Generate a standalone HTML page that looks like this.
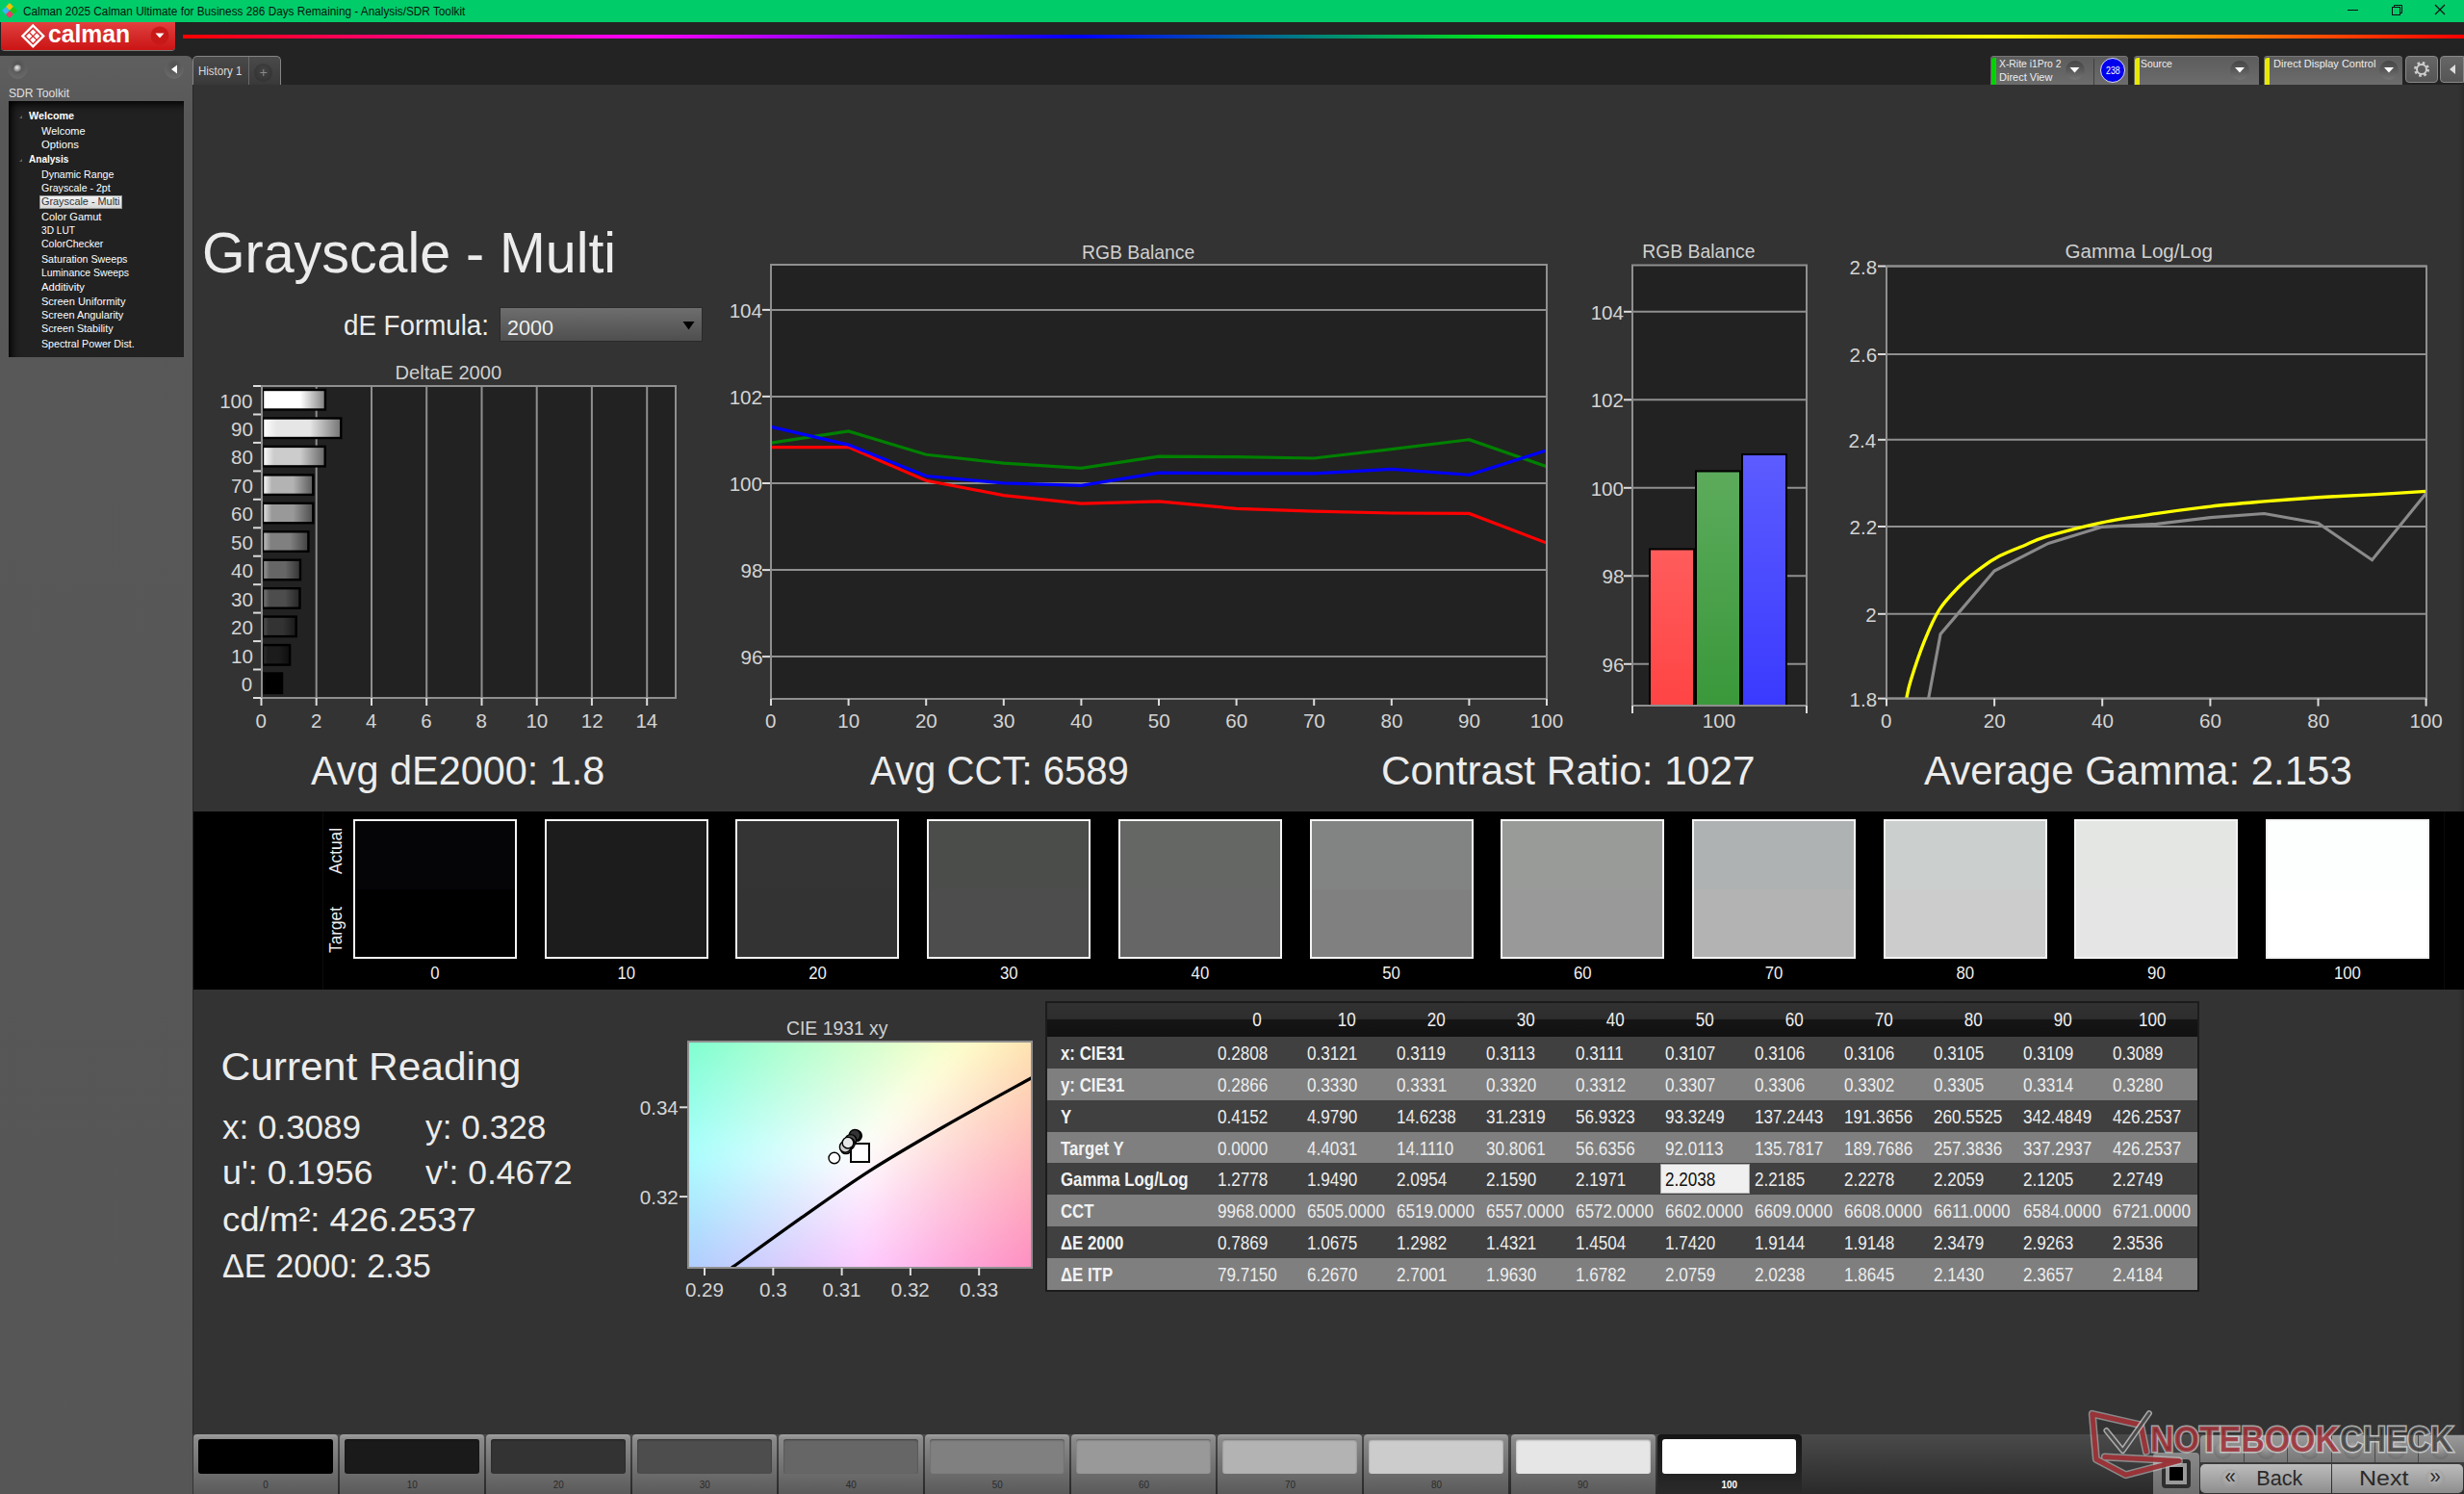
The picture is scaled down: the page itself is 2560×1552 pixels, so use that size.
<!DOCTYPE html>
<html><head><meta charset="utf-8"><title>Calman - Grayscale Multi</title>
<style>
html,body{margin:0;padding:0;}
body{width:2560px;height:1552px;overflow:hidden;position:relative;background:#333;font-family:"Liberation Sans",sans-serif;}
body>div{position:absolute;}
svg{position:absolute;left:0;top:0;font-family:"Liberation Sans",sans-serif;}
</style></head><body>
<div style="left:0;top:0;width:2560px;height:23px;background:#00cc6a"></div>
<div style="left:0;top:23px;width:2560px;height:65px;background:#232323"></div>
<div style="left:1px;top:23px;width:181px;height:29px;background:linear-gradient(#e34040,#d42a2a 50%,#cc1414);border-radius:0 0 4px 4px;box-shadow:0 1px 0 #777"></div>
<div style="left:190px;top:36px;width:2370px;height:4px;background:linear-gradient(90deg,#ff0000 0%,#ff00ff 20.25%,#0000ff 39.2%,#00ff00 59.5%,#ffff00 79.3%,#ff0000 100%)"></div>
<div style="left:0;top:58px;width:200px;height:1494px;background:linear-gradient(#5f5f5f,#585858 60px,#565656);border-radius:0 6px 0 0"></div>
<div style="left:9px;top:105px;width:182px;height:266px;background:#212121;box-shadow:inset 6px 6px 8px -3px #000"></div>
<div style="left:41px;top:203px;width:86px;height:14px;background:linear-gradient(#f2f2f2,#d8d8d8);border:1px solid #999;box-sizing:border-box"></div>
<div style="left:200px;top:88px;width:2360px;height:1402px;background:#333;border-left:1px solid #262626;box-sizing:border-box"></div>
<div style="left:200px;top:58px;width:92px;height:30px;background:linear-gradient(#4a4a4a,#393939);border:1px solid #858585;border-bottom:none;border-radius:5px 5px 0 0;box-sizing:border-box"></div>
<div style="left:258px;top:59px;width:1px;height:29px;background:#6a6a6a"></div>
<div style="left:264px;top:66px;width:19px;height:19px;border-radius:50%;background:radial-gradient(circle at 50% 40%,#444,#2e2e2e)"></div>
<div style="left:2554px;top:88px;width:6px;height:1402px;background:linear-gradient(90deg,#333,#2a2a2a)"></div>
<div style="left:201px;top:843px;width:2359px;height:185px;background:#000"></div>
<div style="left:335px;top:843px;width:1px;height:185px;background:#0c0c0c"></div>
<div style="left:2539px;top:843px;width:1px;height:185px;background:#0a0a0a"></div>
<div style="left:367.0px;top:851px;width:170px;height:145px;border:2px solid #f4f4f4;box-sizing:border-box;background:linear-gradient(#050508 50%,#000000 50%)"></div>
<div style="left:565.7px;top:851px;width:170px;height:145px;border:2px solid #f4f4f4;box-sizing:border-box;background:linear-gradient(#1c1c1c 50%,#1c1c1c 50%)"></div>
<div style="left:764.4px;top:851px;width:170px;height:145px;border:2px solid #f4f4f4;box-sizing:border-box;background:linear-gradient(#333433 50%,#333333 50%)"></div>
<div style="left:963.1px;top:851px;width:170px;height:145px;border:2px solid #f4f4f4;box-sizing:border-box;background:linear-gradient(#4b4d4b 50%,#4d4d4d 50%)"></div>
<div style="left:1161.8px;top:851px;width:170px;height:145px;border:2px solid #f4f4f4;box-sizing:border-box;background:linear-gradient(#656765 50%,#666666 50%)"></div>
<div style="left:1360.5px;top:851px;width:170px;height:145px;border:2px solid #f4f4f4;box-sizing:border-box;background:linear-gradient(#828483 50%,#808080 50%)"></div>
<div style="left:1559.2px;top:851px;width:170px;height:145px;border:2px solid #f4f4f4;box-sizing:border-box;background:linear-gradient(#999b99 50%,#999999 50%)"></div>
<div style="left:1757.9px;top:851px;width:170px;height:145px;border:2px solid #f4f4f4;box-sizing:border-box;background:linear-gradient(#aeb2b2 50%,#b3b3b3 50%)"></div>
<div style="left:1956.6px;top:851px;width:170px;height:145px;border:2px solid #f4f4f4;box-sizing:border-box;background:linear-gradient(#cbcfcd 50%,#cccccc 50%)"></div>
<div style="left:2155.3px;top:851px;width:170px;height:145px;border:2px solid #f4f4f4;box-sizing:border-box;background:linear-gradient(#e3e6e3 50%,#e5e5e5 50%)"></div>
<div style="left:2354.0px;top:851px;width:170px;height:145px;border:2px solid #f4f4f4;box-sizing:border-box;background:linear-gradient(#fdffff 50%,#ffffff 50%)"></div>
<div style="left:1086px;top:1040px;width:1199px;height:302px;background:#1c1c1c"></div>
<div style="left:1088px;top:1042px;width:1195px;height:35px;background:linear-gradient(#313131,#2d2d2d 47%,#151515 50%,#111 100%)"></div>
<div style="left:1088px;top:1077.00px;width:1195px;height:33.15px;background:#404040"></div>
<div style="left:1088px;top:1109.85px;width:1195px;height:33.15px;background:#7f7f7f"></div>
<div style="left:1088px;top:1142.70px;width:1195px;height:33.15px;background:#404040"></div>
<div style="left:1088px;top:1175.55px;width:1195px;height:33.15px;background:#7f7f7f"></div>
<div style="left:1088px;top:1208.40px;width:1195px;height:33.15px;background:#404040"></div>
<div style="left:1088px;top:1241.25px;width:1195px;height:33.15px;background:#7f7f7f"></div>
<div style="left:1088px;top:1274.10px;width:1195px;height:33.15px;background:#404040"></div>
<div style="left:1088px;top:1306.95px;width:1195px;height:33.15px;background:#7f7f7f"></div>
<div style="left:1725px;top:1209px;width:93px;height:31px;background:#f0f0f0;border:1px solid #aaa;box-sizing:border-box"></div>
<div style="left:201px;top:1490px;width:2359px;height:62px;background:linear-gradient(#4a4a4a,#2a2a2a)"></div>
<div style="left:201.0px;top:1490px;width:150px;height:62px;background:linear-gradient(#a0a0a0,#8a8a8a 8%,#6a6a6a 70%,#5a5a5a);border-radius:4px 4px 0 0"></div>
<div style="left:206.0px;top:1495px;width:140px;height:36px;background:#000;border-radius:3px;box-shadow:inset 0 1px 2px rgba(0,0,0,.4)"></div>
<div style="left:353.1px;top:1490px;width:150px;height:62px;background:linear-gradient(#a0a0a0,#8a8a8a 8%,#6a6a6a 70%,#5a5a5a);border-radius:4px 4px 0 0"></div>
<div style="left:358.1px;top:1495px;width:140px;height:36px;background:#1a1a1a;border-radius:3px;box-shadow:inset 0 1px 2px rgba(0,0,0,.4)"></div>
<div style="left:505.1px;top:1490px;width:150px;height:62px;background:linear-gradient(#a0a0a0,#8a8a8a 8%,#6a6a6a 70%,#5a5a5a);border-radius:4px 4px 0 0"></div>
<div style="left:510.1px;top:1495px;width:140px;height:36px;background:#333;border-radius:3px;box-shadow:inset 0 1px 2px rgba(0,0,0,.4)"></div>
<div style="left:657.2px;top:1490px;width:150px;height:62px;background:linear-gradient(#a0a0a0,#8a8a8a 8%,#6a6a6a 70%,#5a5a5a);border-radius:4px 4px 0 0"></div>
<div style="left:662.2px;top:1495px;width:140px;height:36px;background:#4d4d4d;border-radius:3px;box-shadow:inset 0 1px 2px rgba(0,0,0,.4)"></div>
<div style="left:809.2px;top:1490px;width:150px;height:62px;background:linear-gradient(#a0a0a0,#8a8a8a 8%,#6a6a6a 70%,#5a5a5a);border-radius:4px 4px 0 0"></div>
<div style="left:814.2px;top:1495px;width:140px;height:36px;background:#666;border-radius:3px;box-shadow:inset 0 1px 2px rgba(0,0,0,.4)"></div>
<div style="left:961.2px;top:1490px;width:150px;height:62px;background:linear-gradient(#a0a0a0,#8a8a8a 8%,#6a6a6a 70%,#5a5a5a);border-radius:4px 4px 0 0"></div>
<div style="left:966.2px;top:1495px;width:140px;height:36px;background:#808080;border-radius:3px;box-shadow:inset 0 1px 2px rgba(0,0,0,.4)"></div>
<div style="left:1113.3px;top:1490px;width:150px;height:62px;background:linear-gradient(#a0a0a0,#8a8a8a 8%,#6a6a6a 70%,#5a5a5a);border-radius:4px 4px 0 0"></div>
<div style="left:1118.3px;top:1495px;width:140px;height:36px;background:#999;border-radius:3px;box-shadow:inset 0 1px 2px rgba(0,0,0,.4)"></div>
<div style="left:1265.4px;top:1490px;width:150px;height:62px;background:linear-gradient(#a0a0a0,#8a8a8a 8%,#6a6a6a 70%,#5a5a5a);border-radius:4px 4px 0 0"></div>
<div style="left:1270.4px;top:1495px;width:140px;height:36px;background:#b3b3b3;border-radius:3px;box-shadow:inset 0 1px 2px rgba(0,0,0,.4)"></div>
<div style="left:1417.4px;top:1490px;width:150px;height:62px;background:linear-gradient(#a0a0a0,#8a8a8a 8%,#6a6a6a 70%,#5a5a5a);border-radius:4px 4px 0 0"></div>
<div style="left:1422.4px;top:1495px;width:140px;height:36px;background:#ccc;border-radius:3px;box-shadow:inset 0 1px 2px rgba(0,0,0,.4)"></div>
<div style="left:1569.5px;top:1490px;width:150px;height:62px;background:linear-gradient(#a0a0a0,#8a8a8a 8%,#6a6a6a 70%,#5a5a5a);border-radius:4px 4px 0 0"></div>
<div style="left:1574.5px;top:1495px;width:140px;height:36px;background:#e6e6e6;border-radius:3px;box-shadow:inset 0 1px 2px rgba(0,0,0,.4)"></div>
<div style="left:1721.5px;top:1490px;width:150px;height:62px;background:linear-gradient(#161616,#2a2a2a);border-radius:4px 4px 0 0"></div>
<div style="left:1726.5px;top:1495px;width:139px;height:36px;background:#fff;border-radius:3px"></div>
<div style="left:2237px;top:1509px;width:48px;height:43px;background:linear-gradient(#8a8a8a,#6e6e6e);border-radius:4px 4px 0 0"></div>
<div style="left:2246px;top:1516px;width:30px;height:30px;border:4px solid #2e2e2e;border-radius:4px;box-sizing:border-box;background:#999"></div>
<div style="left:2254px;top:1524px;width:14px;height:14px;background:#000"></div>
<div style="left:2286px;top:1491px;width:274px;height:28px;background:linear-gradient(#9a9a9a,#777);border-radius:4px 0 0 0"></div>
<div style="left:2299.5px;top:1497px;width:19px;height:19px;border-radius:50%;background:radial-gradient(circle at 50% 30%,#a8a8a8,#6e6e6e 80%)"></div>
<div style="left:2344.7px;top:1497px;width:19px;height:19px;border-radius:50%;background:radial-gradient(circle at 50% 30%,#a8a8a8,#6e6e6e 80%)"></div>
<div style="left:2389.9px;top:1497px;width:19px;height:19px;border-radius:50%;background:radial-gradient(circle at 50% 30%,#a8a8a8,#6e6e6e 80%)"></div>
<div style="left:2435.1px;top:1497px;width:19px;height:19px;border-radius:50%;background:radial-gradient(circle at 50% 30%,#a8a8a8,#6e6e6e 80%)"></div>
<div style="left:2480.3px;top:1497px;width:19px;height:19px;border-radius:50%;background:radial-gradient(circle at 50% 30%,#a8a8a8,#6e6e6e 80%)"></div>
<div style="left:2525.5px;top:1497px;width:19px;height:19px;border-radius:50%;background:radial-gradient(circle at 50% 30%,#a8a8a8,#6e6e6e 80%)"></div>
<div style="left:2331.2px;top:1491px;width:1px;height:28px;background:#4a4a4a"></div>
<div style="left:2376.4px;top:1491px;width:1px;height:28px;background:#4a4a4a"></div>
<div style="left:2421.6px;top:1491px;width:1px;height:28px;background:#4a4a4a"></div>
<div style="left:2466.8px;top:1491px;width:1px;height:28px;background:#4a4a4a"></div>
<div style="left:2512.0px;top:1491px;width:1px;height:28px;background:#4a4a4a"></div>
<div style="left:2286px;top:1521px;width:136px;height:30px;background:linear-gradient(#bcbcbc,#8e8e8e);border-radius:5px 0 0 5px;box-shadow:0 1px 0 #333"></div>
<div style="left:2423px;top:1521px;width:136px;height:30px;background:linear-gradient(#bcbcbc,#8e8e8e);border-radius:0 5px 5px 0;box-shadow:0 1px 0 #333"></div>
<div style="left:2307px;top:1526px;width:20px;height:20px;border-radius:50%;background:radial-gradient(circle at 50% 35%,#c0c0c0,#8a8a8a)"></div>
<div style="left:2520px;top:1526px;width:20px;height:20px;border-radius:50%;background:radial-gradient(circle at 50% 35%,#c0c0c0,#8a8a8a)"></div>
<div style="left:2068px;top:58px;width:143px;height:30px;background:linear-gradient(#5c5c5c,#6c6c6c);border-radius:4px 4px 0 0;box-shadow:inset 0 1px 0 #777"></div>
<div style="left:2069px;top:60px;width:5px;height:28px;background:#00d400;border-radius:3px 0 0 0"></div>
<div style="left:2217px;top:58px;width:130px;height:30px;background:linear-gradient(#5c5c5c,#6c6c6c);border-radius:4px 4px 0 0;box-shadow:inset 0 1px 0 #777"></div>
<div style="left:2218px;top:60px;width:5px;height:28px;background:#e8e800;border-radius:3px 0 0 0"></div>
<div style="left:2352px;top:58px;width:144px;height:30px;background:linear-gradient(#5c5c5c,#6c6c6c);border-radius:4px 4px 0 0;box-shadow:inset 0 1px 0 #777"></div>
<div style="left:2353px;top:60px;width:5px;height:28px;background:#e8e800;border-radius:3px 0 0 0"></div>
<div style="left:2175px;top:61px;width:1px;height:27px;background:#3f3f3f"></div>
<div style="left:2145.5px;top:62.5px;width:20px;height:20px;border-radius:50%;background:linear-gradient(#454545,#5c5c5c 55%,#747474)"></div>
<div style="left:2317px;top:62.5px;width:20px;height:20px;border-radius:50%;background:linear-gradient(#454545,#5c5c5c 55%,#747474)"></div>
<div style="left:2472px;top:62.5px;width:20px;height:20px;border-radius:50%;background:linear-gradient(#454545,#5c5c5c 55%,#747474)"></div>
<div style="left:2182px;top:60px;width:26px;height:26px;border-radius:50%;background:#0000ee;border:1px solid #dde;box-sizing:border-box"></div>
<div style="left:2499px;top:58px;width:34px;height:28px;background:linear-gradient(#666,#555);border:1px solid #888;border-radius:4px;box-sizing:border-box"></div>
<div style="left:2535px;top:58px;width:25px;height:28px;background:linear-gradient(#666,#555);border:1px solid #888;border-radius:4px 0 0 4px;box-sizing:border-box"></div>
<svg width="2560" height="1552" viewBox="0 0 2560 1552">
<polygon points="10,3 14,7 10,11 6,7" fill="#f5c000"/><polygon points="6,7 10,11 6,15 2,11" fill="#35b8f5"/><polygon points="14,7 18,11 14,15 10,11" fill="#17c817"/><polygon points="10,11 14,15 10,19 6,15" fill="#f0386a"/>
<line x1="2439" y1="10.5" x2="2450" y2="10.5" stroke="#111" stroke-width="1"/>
<rect x="2485.5" y="7.5" width="8" height="8" fill="none" stroke="#111"/><path d="M2487.5 7.5 V5.5 H2495.5 V13.5 H2493.5" fill="none" stroke="#111"/>
<path d="M2530 5 L2540 15 M2540 5 L2530 15" stroke="#111" stroke-width="1.2"/>
<g fill="none" stroke="#fff" stroke-width="2.4"><polygon points="34.3,26.5 45.2,37.4 34.3,48.3 23.4,37.4"/></g>
<g fill="#fff"><polygon points="34.3,30.5 37.4,33.6 34.3,36.7 31.2,33.6"/><polygon points="30.3,34.5 33.4,37.6 30.3,40.7 27.2,37.6"/><polygon points="38.3,34.5 41.4,37.6 38.3,40.7 35.2,37.6"/><polygon points="34.3,38.5 37.4,41.6 34.3,44.7 31.2,41.6"/></g>
<circle cx="166" cy="37" r="9.5" fill="#c81818"/><polygon points="161.5,34.5 170.5,34.5 166,39.5" fill="#fff"/>
<defs><radialGradient id="ball" cx="0.4" cy="0.35" r="0.6"><stop offset="0" stop-color="#f0f0f0"/><stop offset="0.6" stop-color="#9a9a9a"/><stop offset="1" stop-color="#555"/></radialGradient><radialGradient id="btnc" cx="0.5" cy="0.3" r="0.7"><stop offset="0" stop-color="#505050"/><stop offset="1" stop-color="#6a6a6a"/></radialGradient></defs><circle cx="18.5" cy="72" r="10" fill="url(#btnc)"/><circle cx="18.5" cy="71.5" r="4.2" fill="url(#ball)"/>
<circle cx="181" cy="72" r="10" fill="url(#btnc)"/><polygon points="178,72 184,67.5 184,76.5" fill="#fff"/>
<polygon points="20,123 23,120 23,123" fill="#666"/><polygon points="20,168 23,165 23,168" fill="#666"/>
<path d="M273.8 72 V79 M270.3 75.5 H277.3" stroke="#8a8a8a" stroke-width="1"/>
<polygon points="2150.5,70 2160.5,70 2155.5,75.5" fill="#fff"/>
<polygon points="2322,70 2332,70 2327,75.5" fill="#fff"/>
<polygon points="2477,70 2487,70 2482,75.5" fill="#fff"/>
<g transform="translate(2516,72)"><circle r="6.5" fill="none" stroke="#ccc" stroke-width="3" stroke-dasharray="2.5 2.6"/><circle r="5" fill="none" stroke="#ccc" stroke-width="2"/></g>
<polygon points="2545,72 2551,67 2551,77" fill="#ddd"/>
<defs><linearGradient id="dd" x1="0" y1="0" x2="0" y2="1"><stop offset="0" stop-color="#6e6e6e"/><stop offset="1" stop-color="#4e4e4e"/></linearGradient></defs>
<rect x="519.5" y="319.5" width="210" height="35" fill="url(#dd)" stroke="#2a2a2a" stroke-width="1"/>
<polygon points="709.5,334 721.5,334 715.5,342.5" fill="#000"/>
<rect x="272" y="401" width="430" height="324" fill="#222"/>
<line x1="328.7" y1="401" x2="328.7" y2="725" stroke="#8f8f8f" stroke-width="2"/>
<line x1="386.0" y1="401" x2="386.0" y2="725" stroke="#8f8f8f" stroke-width="2"/>
<line x1="443.2" y1="401" x2="443.2" y2="725" stroke="#8f8f8f" stroke-width="2"/>
<line x1="500.5" y1="401" x2="500.5" y2="725" stroke="#8f8f8f" stroke-width="2"/>
<line x1="557.7" y1="401" x2="557.7" y2="725" stroke="#8f8f8f" stroke-width="2"/>
<line x1="614.9" y1="401" x2="614.9" y2="725" stroke="#8f8f8f" stroke-width="2"/>
<line x1="672.2" y1="401" x2="672.2" y2="725" stroke="#8f8f8f" stroke-width="2"/>
<defs>
<linearGradient id="bg0" x1="0" x2="1" y1="0" y2="0"><stop offset="0" stop-color="rgb(10,10,10)"/><stop offset="0.18" stop-color="rgb(0,0,0)"/><stop offset="0.6" stop-color="rgb(0,0,0)"/><stop offset="1" stop-color="rgb(0,0,0)"/></linearGradient>
<linearGradient id="bg1" x1="0" x2="1" y1="0" y2="0"><stop offset="0" stop-color="rgb(50,50,50)"/><stop offset="0.18" stop-color="rgb(28,28,28)"/><stop offset="0.6" stop-color="rgb(28,28,28)"/><stop offset="1" stop-color="rgb(14,14,14)"/></linearGradient>
<linearGradient id="bg2" x1="0" x2="1" y1="0" y2="0"><stop offset="0" stop-color="rgb(83,83,83)"/><stop offset="0.18" stop-color="rgb(51,51,51)"/><stop offset="0.6" stop-color="rgb(51,51,51)"/><stop offset="1" stop-color="rgb(25,25,25)"/></linearGradient>
<linearGradient id="bg3" x1="0" x2="1" y1="0" y2="0"><stop offset="0" stop-color="rgb(121,121,121)"/><stop offset="0.18" stop-color="rgb(77,77,77)"/><stop offset="0.6" stop-color="rgb(77,77,77)"/><stop offset="1" stop-color="rgb(38,38,38)"/></linearGradient>
<linearGradient id="bg4" x1="0" x2="1" y1="0" y2="0"><stop offset="0" stop-color="rgb(157,157,157)"/><stop offset="0.18" stop-color="rgb(102,102,102)"/><stop offset="0.6" stop-color="rgb(102,102,102)"/><stop offset="1" stop-color="rgb(51,51,51)"/></linearGradient>
<linearGradient id="bg5" x1="0" x2="1" y1="0" y2="0"><stop offset="0" stop-color="rgb(195,195,195)"/><stop offset="0.18" stop-color="rgb(128,128,128)"/><stop offset="0.6" stop-color="rgb(128,128,128)"/><stop offset="1" stop-color="rgb(64,64,64)"/></linearGradient>
<linearGradient id="bg6" x1="0" x2="1" y1="0" y2="0"><stop offset="0" stop-color="rgb(231,231,231)"/><stop offset="0.18" stop-color="rgb(153,153,153)"/><stop offset="0.6" stop-color="rgb(153,153,153)"/><stop offset="1" stop-color="rgb(76,76,76)"/></linearGradient>
<linearGradient id="bg7" x1="0" x2="1" y1="0" y2="0"><stop offset="0" stop-color="rgb(255,255,255)"/><stop offset="0.18" stop-color="rgb(179,179,179)"/><stop offset="0.6" stop-color="rgb(179,179,179)"/><stop offset="1" stop-color="rgb(89,89,89)"/></linearGradient>
<linearGradient id="bg8" x1="0" x2="1" y1="0" y2="0"><stop offset="0" stop-color="rgb(255,255,255)"/><stop offset="0.18" stop-color="rgb(204,204,204)"/><stop offset="0.6" stop-color="rgb(204,204,204)"/><stop offset="1" stop-color="rgb(102,102,102)"/></linearGradient>
<linearGradient id="bg9" x1="0" x2="1" y1="0" y2="0"><stop offset="0" stop-color="rgb(255,255,255)"/><stop offset="0.18" stop-color="rgb(230,230,230)"/><stop offset="0.6" stop-color="rgb(230,230,230)"/><stop offset="1" stop-color="rgb(115,115,115)"/></linearGradient>
<linearGradient id="bg10" x1="0" x2="1" y1="0" y2="0"><stop offset="0" stop-color="rgb(255,255,255)"/><stop offset="0.18" stop-color="rgb(255,255,255)"/><stop offset="0.6" stop-color="rgb(255,255,255)"/><stop offset="1" stop-color="rgb(127,127,127)"/></linearGradient>
</defs>
<rect x="273" y="405.0" width="64.9" height="20.5" fill="url(#bg10)" stroke="#000" stroke-width="2.4"/>
<line x1="263" y1="401.0" x2="271" y2="401.0" stroke="#ddd" stroke-width="2"/>
<rect x="273" y="434.5" width="81.3" height="20.5" fill="url(#bg9)" stroke="#000" stroke-width="2.4"/>
<line x1="263" y1="430.5" x2="271" y2="430.5" stroke="#ddd" stroke-width="2"/>
<rect x="273" y="463.9" width="64.7" height="20.5" fill="url(#bg8)" stroke="#000" stroke-width="2.4"/>
<line x1="263" y1="459.9" x2="271" y2="459.9" stroke="#ddd" stroke-width="2"/>
<rect x="273" y="493.4" width="52.3" height="20.5" fill="url(#bg7)" stroke="#000" stroke-width="2.4"/>
<line x1="263" y1="489.4" x2="271" y2="489.4" stroke="#ddd" stroke-width="2"/>
<rect x="273" y="522.8" width="52.3" height="20.5" fill="url(#bg6)" stroke="#000" stroke-width="2.4"/>
<line x1="263" y1="518.8" x2="271" y2="518.8" stroke="#ddd" stroke-width="2"/>
<rect x="273" y="552.3" width="47.4" height="20.5" fill="url(#bg5)" stroke="#000" stroke-width="2.4"/>
<line x1="263" y1="548.3" x2="271" y2="548.3" stroke="#ddd" stroke-width="2"/>
<rect x="273" y="581.7" width="39.0" height="20.5" fill="url(#bg4)" stroke="#000" stroke-width="2.4"/>
<line x1="263" y1="577.7" x2="271" y2="577.7" stroke="#ddd" stroke-width="2"/>
<rect x="273" y="611.2" width="38.5" height="20.5" fill="url(#bg3)" stroke="#000" stroke-width="2.4"/>
<line x1="263" y1="607.2" x2="271" y2="607.2" stroke="#ddd" stroke-width="2"/>
<rect x="273" y="640.6" width="34.7" height="20.5" fill="url(#bg2)" stroke="#000" stroke-width="2.4"/>
<line x1="263" y1="636.6" x2="271" y2="636.6" stroke="#ddd" stroke-width="2"/>
<rect x="273" y="670.1" width="28.1" height="20.5" fill="url(#bg1)" stroke="#000" stroke-width="2.4"/>
<line x1="263" y1="666.1" x2="271" y2="666.1" stroke="#ddd" stroke-width="2"/>
<rect x="273" y="699.5" width="20.0" height="20.5" fill="url(#bg0)" stroke="#000" stroke-width="2.4"/>
<line x1="263" y1="695.5" x2="271" y2="695.5" stroke="#ddd" stroke-width="2"/>
<line x1="263" y1="725" x2="271" y2="725" stroke="#ddd" stroke-width="2"/>
<rect x="272" y="401" width="430" height="324" fill="none" stroke="#8f8f8f" stroke-width="2"/>
<line x1="271.5" y1="725" x2="271.5" y2="733" stroke="#ddd" stroke-width="2"/>
<line x1="328.7" y1="725" x2="328.7" y2="733" stroke="#ddd" stroke-width="2"/>
<line x1="386.0" y1="725" x2="386.0" y2="733" stroke="#ddd" stroke-width="2"/>
<line x1="443.2" y1="725" x2="443.2" y2="733" stroke="#ddd" stroke-width="2"/>
<line x1="500.5" y1="725" x2="500.5" y2="733" stroke="#ddd" stroke-width="2"/>
<line x1="557.7" y1="725" x2="557.7" y2="733" stroke="#ddd" stroke-width="2"/>
<line x1="614.9" y1="725" x2="614.9" y2="733" stroke="#ddd" stroke-width="2"/>
<line x1="672.2" y1="725" x2="672.2" y2="733" stroke="#ddd" stroke-width="2"/>
<rect x="801" y="275" width="806" height="451" fill="#222"/>
<line x1="801" y1="682.1" x2="1607" y2="682.1" stroke="#8f8f8f" stroke-width="2"/>
<line x1="792" y1="682.1" x2="800" y2="682.1" stroke="#ddd" stroke-width="2"/>
<line x1="801" y1="592.1" x2="1607" y2="592.1" stroke="#8f8f8f" stroke-width="2"/>
<line x1="792" y1="592.1" x2="800" y2="592.1" stroke="#ddd" stroke-width="2"/>
<line x1="801" y1="502.0" x2="1607" y2="502.0" stroke="#8f8f8f" stroke-width="2"/>
<line x1="792" y1="502.0" x2="800" y2="502.0" stroke="#ddd" stroke-width="2"/>
<line x1="801" y1="411.9" x2="1607" y2="411.9" stroke="#8f8f8f" stroke-width="2"/>
<line x1="792" y1="411.9" x2="800" y2="411.9" stroke="#ddd" stroke-width="2"/>
<line x1="801" y1="321.9" x2="1607" y2="321.9" stroke="#8f8f8f" stroke-width="2"/>
<line x1="792" y1="321.9" x2="800" y2="321.9" stroke="#ddd" stroke-width="2"/>
<clipPath id="rgbclip"><rect x="801" y="275" width="806" height="451"/></clipPath><g clip-path="url(#rgbclip)">
<polyline points="801.0,464.6 881.6,464.6 962.2,499.2 1042.8,514.6 1123.4,523.1 1204.0,520.9 1284.6,528.4 1365.2,531.2 1445.8,533.0 1526.4,533.4 1607.0,564.1" fill="none" stroke="#ff0000" stroke-width="3.2" stroke-linejoin="miter"/>
<polyline points="801.0,460.2 881.6,448.0 962.2,472.3 1042.8,481.2 1123.4,486.3 1204.0,474.2 1284.6,474.7 1365.2,476.0 1445.8,466.6 1526.4,456.7 1607.0,484.8" fill="none" stroke="#008000" stroke-width="3.2" stroke-linejoin="miter"/>
<polyline points="801.0,443.4 881.6,462.1 962.2,494.5 1042.8,501.9 1123.4,504.3 1204.0,491.1 1284.6,491.8 1365.2,491.8 1445.8,487.4 1526.4,493.3 1607.0,467.7" fill="none" stroke="#0000ff" stroke-width="3.2" stroke-linejoin="miter"/>
</g>
<rect x="801" y="275" width="806" height="451" fill="none" stroke="#8f8f8f" stroke-width="2"/>
<line x1="801.0" y1="726" x2="801.0" y2="733" stroke="#ddd" stroke-width="2"/>
<line x1="881.6" y1="726" x2="881.6" y2="733" stroke="#ddd" stroke-width="2"/>
<line x1="962.2" y1="726" x2="962.2" y2="733" stroke="#ddd" stroke-width="2"/>
<line x1="1042.8" y1="726" x2="1042.8" y2="733" stroke="#ddd" stroke-width="2"/>
<line x1="1123.4" y1="726" x2="1123.4" y2="733" stroke="#ddd" stroke-width="2"/>
<line x1="1204.0" y1="726" x2="1204.0" y2="733" stroke="#ddd" stroke-width="2"/>
<line x1="1284.6" y1="726" x2="1284.6" y2="733" stroke="#ddd" stroke-width="2"/>
<line x1="1365.2" y1="726" x2="1365.2" y2="733" stroke="#ddd" stroke-width="2"/>
<line x1="1445.8" y1="726" x2="1445.8" y2="733" stroke="#ddd" stroke-width="2"/>
<line x1="1526.4" y1="726" x2="1526.4" y2="733" stroke="#ddd" stroke-width="2"/>
<line x1="1607.0" y1="726" x2="1607.0" y2="733" stroke="#ddd" stroke-width="2"/>
<rect x="1696" y="275.5" width="181" height="457.5" fill="#222"/>
<defs><linearGradient id="gr" x1="0" y1="0" x2="0" y2="1"><stop offset="0" stop-color="#ff5c5c"/><stop offset="1" stop-color="#ff4444"/></linearGradient><linearGradient id="gg" x1="0" y1="0" x2="0" y2="1"><stop offset="0" stop-color="#5cab5c"/><stop offset="1" stop-color="#3a983a"/></linearGradient><linearGradient id="gb" x1="0" y1="0" x2="0" y2="1"><stop offset="0" stop-color="#5c5cff"/><stop offset="1" stop-color="#3a3aff"/></linearGradient></defs>
<line x1="1696" y1="689.8" x2="1877" y2="689.8" stroke="#8f8f8f" stroke-width="2"/>
<line x1="1687" y1="689.8" x2="1695" y2="689.8" stroke="#ddd" stroke-width="2"/>
<line x1="1696" y1="598.3" x2="1877" y2="598.3" stroke="#8f8f8f" stroke-width="2"/>
<line x1="1687" y1="598.3" x2="1695" y2="598.3" stroke="#ddd" stroke-width="2"/>
<line x1="1696" y1="506.8" x2="1877" y2="506.8" stroke="#8f8f8f" stroke-width="2"/>
<line x1="1687" y1="506.8" x2="1695" y2="506.8" stroke="#ddd" stroke-width="2"/>
<line x1="1696" y1="415.3" x2="1877" y2="415.3" stroke="#8f8f8f" stroke-width="2"/>
<line x1="1687" y1="415.3" x2="1695" y2="415.3" stroke="#ddd" stroke-width="2"/>
<line x1="1696" y1="323.8" x2="1877" y2="323.8" stroke="#8f8f8f" stroke-width="2"/>
<line x1="1687" y1="323.8" x2="1695" y2="323.8" stroke="#ddd" stroke-width="2"/>
<rect x="1714" y="570.5" width="46" height="162.5" fill="url(#gr)" stroke="#000" stroke-width="2"/>
<rect x="1762" y="489.5" width="46" height="243.5" fill="url(#gg)" stroke="#000" stroke-width="2"/>
<rect x="1810" y="472" width="46" height="261.0" fill="url(#gb)" stroke="#000" stroke-width="2"/>
<rect x="1696" y="275.5" width="181" height="457.5" fill="none" stroke="#8f8f8f" stroke-width="2"/>
<line x1="1696" y1="733" x2="1696" y2="741" stroke="#ddd" stroke-width="2"/><line x1="1877" y1="733" x2="1877" y2="741" stroke="#ddd" stroke-width="2"/>
<rect x="1960" y="276.5" width="561" height="449.1" fill="#222"/>
<line x1="1960" y1="725.6" x2="2521" y2="725.6" stroke="#8f8f8f" stroke-width="2"/>
<line x1="1951" y1="725.6" x2="1959" y2="725.6" stroke="#ddd" stroke-width="2"/>
<line x1="1960" y1="637.8" x2="2521" y2="637.8" stroke="#8f8f8f" stroke-width="2"/>
<line x1="1951" y1="637.8" x2="1959" y2="637.8" stroke="#ddd" stroke-width="2"/>
<line x1="1960" y1="547.0" x2="2521" y2="547.0" stroke="#8f8f8f" stroke-width="2"/>
<line x1="1951" y1="547.0" x2="1959" y2="547.0" stroke="#ddd" stroke-width="2"/>
<line x1="1960" y1="456.8" x2="2521" y2="456.8" stroke="#8f8f8f" stroke-width="2"/>
<line x1="1951" y1="456.8" x2="1959" y2="456.8" stroke="#ddd" stroke-width="2"/>
<line x1="1960" y1="368.0" x2="2521" y2="368.0" stroke="#8f8f8f" stroke-width="2"/>
<line x1="1951" y1="368.0" x2="1959" y2="368.0" stroke="#ddd" stroke-width="2"/>
<line x1="1960" y1="276.5" x2="2521" y2="276.5" stroke="#8f8f8f" stroke-width="2"/>
<line x1="1951" y1="276.5" x2="1959" y2="276.5" stroke="#ddd" stroke-width="2"/>
<clipPath id="gclip"><rect x="1960" y="276.5" width="561" height="449.1"/></clipPath><g clip-path="url(#gclip)">
<polyline points="1960.0,960.1 2016.1,658.7 2072.1,593.0 2128.2,564.4 2184.2,547.3 2240.3,544.3 2296.4,537.7 2352.4,533.5 2408.5,543.4 2464.5,581.7 2520.6,512.4" fill="none" stroke="#8a8a8a" stroke-width="3.2"/>
<path d="M1977.5,745.0 C1978.0,741.8 1979.5,732.0 1980.8,725.6 C1982.0,719.1 1982.2,716.3 1985.3,706.4 C1988.4,696.5 1994.3,678.6 1999.2,666.4 C2004.1,654.2 2008.5,643.2 2014.9,633.3 C2021.2,623.5 2030.2,614.5 2037.5,607.2 C2044.7,600.0 2051.7,594.7 2058.4,589.8 C2065.0,584.9 2070.3,581.4 2077.5,577.6 C2084.8,573.9 2093.8,570.5 2101.9,567.2 C2110.0,563.8 2112.6,561.5 2126.2,557.4 C2139.9,553.4 2164.5,546.8 2183.7,542.8 C2202.8,538.8 2222.3,536.2 2241.1,533.4 C2260.0,530.6 2278.2,528.2 2296.8,526.1 C2315.4,524.0 2333.9,522.5 2352.5,520.9 C2371.1,519.3 2389.6,517.9 2408.2,516.7 C2426.7,515.6 2445.1,515.0 2463.9,513.9 C2482.6,512.9 2511.1,511.0 2520.6,510.4" fill="none" stroke="#ffff00" stroke-width="3.4" stroke-linejoin="round"/>
</g>
<rect x="1960" y="276.5" width="561" height="449.1" fill="none" stroke="#8f8f8f" stroke-width="2"/>
<line x1="1960.0" y1="725.6" x2="1960.0" y2="733.6" stroke="#ddd" stroke-width="2"/>
<line x1="2072.1" y1="725.6" x2="2072.1" y2="733.6" stroke="#ddd" stroke-width="2"/>
<line x1="2184.2" y1="725.6" x2="2184.2" y2="733.6" stroke="#ddd" stroke-width="2"/>
<line x1="2296.4" y1="725.6" x2="2296.4" y2="733.6" stroke="#ddd" stroke-width="2"/>
<line x1="2408.5" y1="725.6" x2="2408.5" y2="733.6" stroke="#ddd" stroke-width="2"/>
<line x1="2520.6" y1="725.6" x2="2520.6" y2="733.6" stroke="#ddd" stroke-width="2"/>
<text transform="translate(355,908) rotate(-90)" font-size="19" fill="#eee" textLength="48" lengthAdjust="spacingAndGlyphs">Actual</text>
<text transform="translate(355,990) rotate(-90)" font-size="19" fill="#eee" textLength="48" lengthAdjust="spacingAndGlyphs">Target</text>
<defs><filter id="blur" x="-10%" y="-10%" width="120%" height="120%"><feGaussianBlur stdDeviation="12"/></filter><clipPath id="cieclip"><rect x="715" y="1082" width="357" height="235"/></clipPath></defs>
<g clip-path="url(#cieclip)"><g filter="url(#blur)">
<rect x="685.2" y="1052.6" width="15.9" height="15.7" fill="rgb(108,254,200)"/>
<rect x="700.1" y="1052.6" width="15.9" height="15.7" fill="rgb(116,254,200)"/>
<rect x="715.0" y="1052.6" width="15.9" height="15.7" fill="rgb(123,254,200)"/>
<rect x="729.9" y="1052.6" width="15.9" height="15.7" fill="rgb(130,254,200)"/>
<rect x="744.8" y="1052.6" width="15.9" height="15.7" fill="rgb(137,254,199)"/>
<rect x="759.6" y="1052.6" width="15.9" height="15.7" fill="rgb(144,254,199)"/>
<rect x="774.5" y="1052.6" width="15.9" height="15.7" fill="rgb(151,254,199)"/>
<rect x="789.4" y="1052.6" width="15.9" height="15.7" fill="rgb(158,254,198)"/>
<rect x="804.2" y="1052.6" width="15.9" height="15.7" fill="rgb(165,254,198)"/>
<rect x="819.1" y="1052.6" width="15.9" height="15.7" fill="rgb(171,254,198)"/>
<rect x="834.0" y="1052.6" width="15.9" height="15.7" fill="rgb(178,254,197)"/>
<rect x="848.9" y="1052.6" width="15.9" height="15.7" fill="rgb(184,254,197)"/>
<rect x="863.8" y="1052.6" width="15.9" height="15.7" fill="rgb(191,254,197)"/>
<rect x="878.6" y="1052.6" width="15.9" height="15.7" fill="rgb(197,254,196)"/>
<rect x="893.5" y="1052.6" width="15.9" height="15.7" fill="rgb(204,254,196)"/>
<rect x="908.4" y="1052.6" width="15.9" height="15.7" fill="rgb(210,254,196)"/>
<rect x="923.2" y="1052.6" width="15.9" height="15.7" fill="rgb(216,254,195)"/>
<rect x="938.1" y="1052.6" width="15.9" height="15.7" fill="rgb(223,254,195)"/>
<rect x="953.0" y="1052.6" width="15.9" height="15.7" fill="rgb(229,254,195)"/>
<rect x="967.9" y="1052.6" width="15.9" height="15.7" fill="rgb(235,254,194)"/>
<rect x="982.8" y="1052.6" width="15.9" height="15.7" fill="rgb(241,254,194)"/>
<rect x="997.6" y="1052.6" width="15.9" height="15.7" fill="rgb(247,254,194)"/>
<rect x="1012.5" y="1052.6" width="15.9" height="15.7" fill="rgb(253,254,193)"/>
<rect x="1027.4" y="1052.6" width="15.9" height="15.7" fill="rgb(254,250,188)"/>
<rect x="1042.2" y="1052.6" width="15.9" height="15.7" fill="rgb(254,244,183)"/>
<rect x="1057.1" y="1052.6" width="15.9" height="15.7" fill="rgb(254,238,177)"/>
<rect x="1072.0" y="1052.6" width="15.9" height="15.7" fill="rgb(254,232,172)"/>
<rect x="1086.9" y="1052.6" width="15.9" height="15.7" fill="rgb(254,227,167)"/>
<rect x="685.2" y="1067.3" width="15.9" height="15.7" fill="rgb(113,254,206)"/>
<rect x="700.1" y="1067.3" width="15.9" height="15.7" fill="rgb(121,254,206)"/>
<rect x="715.0" y="1067.3" width="15.9" height="15.7" fill="rgb(128,254,205)"/>
<rect x="729.9" y="1067.3" width="15.9" height="15.7" fill="rgb(135,254,205)"/>
<rect x="744.8" y="1067.3" width="15.9" height="15.7" fill="rgb(142,254,205)"/>
<rect x="759.6" y="1067.3" width="15.9" height="15.7" fill="rgb(149,254,204)"/>
<rect x="774.5" y="1067.3" width="15.9" height="15.7" fill="rgb(156,254,204)"/>
<rect x="789.4" y="1067.3" width="15.9" height="15.7" fill="rgb(163,254,204)"/>
<rect x="804.2" y="1067.3" width="15.9" height="15.7" fill="rgb(170,254,204)"/>
<rect x="819.1" y="1067.3" width="15.9" height="15.7" fill="rgb(176,254,203)"/>
<rect x="834.0" y="1067.3" width="15.9" height="15.7" fill="rgb(183,254,203)"/>
<rect x="848.9" y="1067.3" width="15.9" height="15.7" fill="rgb(190,254,203)"/>
<rect x="863.8" y="1067.3" width="15.9" height="15.7" fill="rgb(196,254,202)"/>
<rect x="878.6" y="1067.3" width="15.9" height="15.7" fill="rgb(203,254,202)"/>
<rect x="893.5" y="1067.3" width="15.9" height="15.7" fill="rgb(209,254,202)"/>
<rect x="908.4" y="1067.3" width="15.9" height="15.7" fill="rgb(215,254,202)"/>
<rect x="923.2" y="1067.3" width="15.9" height="15.7" fill="rgb(222,254,201)"/>
<rect x="938.1" y="1067.3" width="15.9" height="15.7" fill="rgb(228,254,201)"/>
<rect x="953.0" y="1067.3" width="15.9" height="15.7" fill="rgb(234,254,201)"/>
<rect x="967.9" y="1067.3" width="15.9" height="15.7" fill="rgb(241,254,200)"/>
<rect x="982.8" y="1067.3" width="15.9" height="15.7" fill="rgb(247,254,200)"/>
<rect x="997.6" y="1067.3" width="15.9" height="15.7" fill="rgb(253,254,200)"/>
<rect x="1012.5" y="1067.3" width="15.9" height="15.7" fill="rgb(254,250,195)"/>
<rect x="1027.4" y="1067.3" width="15.9" height="15.7" fill="rgb(254,244,190)"/>
<rect x="1042.2" y="1067.3" width="15.9" height="15.7" fill="rgb(254,238,184)"/>
<rect x="1057.1" y="1067.3" width="15.9" height="15.7" fill="rgb(254,233,179)"/>
<rect x="1072.0" y="1067.3" width="15.9" height="15.7" fill="rgb(254,227,173)"/>
<rect x="1086.9" y="1067.3" width="15.9" height="15.7" fill="rgb(254,222,168)"/>
<rect x="685.2" y="1082.0" width="15.9" height="15.7" fill="rgb(118,254,211)"/>
<rect x="700.1" y="1082.0" width="15.9" height="15.7" fill="rgb(126,254,211)"/>
<rect x="715.0" y="1082.0" width="15.9" height="15.7" fill="rgb(133,254,211)"/>
<rect x="729.9" y="1082.0" width="15.9" height="15.7" fill="rgb(140,254,211)"/>
<rect x="744.8" y="1082.0" width="15.9" height="15.7" fill="rgb(147,254,210)"/>
<rect x="759.6" y="1082.0" width="15.9" height="15.7" fill="rgb(154,254,210)"/>
<rect x="774.5" y="1082.0" width="15.9" height="15.7" fill="rgb(161,254,210)"/>
<rect x="789.4" y="1082.0" width="15.9" height="15.7" fill="rgb(168,254,210)"/>
<rect x="804.2" y="1082.0" width="15.9" height="15.7" fill="rgb(175,254,209)"/>
<rect x="819.1" y="1082.0" width="15.9" height="15.7" fill="rgb(182,254,209)"/>
<rect x="834.0" y="1082.0" width="15.9" height="15.7" fill="rgb(188,254,209)"/>
<rect x="848.9" y="1082.0" width="15.9" height="15.7" fill="rgb(195,254,209)"/>
<rect x="863.8" y="1082.0" width="15.9" height="15.7" fill="rgb(202,254,208)"/>
<rect x="878.6" y="1082.0" width="15.9" height="15.7" fill="rgb(208,254,208)"/>
<rect x="893.5" y="1082.0" width="15.9" height="15.7" fill="rgb(214,254,208)"/>
<rect x="908.4" y="1082.0" width="15.9" height="15.7" fill="rgb(221,254,207)"/>
<rect x="923.2" y="1082.0" width="15.9" height="15.7" fill="rgb(227,254,207)"/>
<rect x="938.1" y="1082.0" width="15.9" height="15.7" fill="rgb(234,254,207)"/>
<rect x="953.0" y="1082.0" width="15.9" height="15.7" fill="rgb(240,254,207)"/>
<rect x="967.9" y="1082.0" width="15.9" height="15.7" fill="rgb(246,254,206)"/>
<rect x="982.8" y="1082.0" width="15.9" height="15.7" fill="rgb(252,254,206)"/>
<rect x="997.6" y="1082.0" width="15.9" height="15.7" fill="rgb(254,250,202)"/>
<rect x="1012.5" y="1082.0" width="15.9" height="15.7" fill="rgb(254,244,196)"/>
<rect x="1027.4" y="1082.0" width="15.9" height="15.7" fill="rgb(254,239,191)"/>
<rect x="1042.2" y="1082.0" width="15.9" height="15.7" fill="rgb(254,233,185)"/>
<rect x="1057.1" y="1082.0" width="15.9" height="15.7" fill="rgb(254,227,180)"/>
<rect x="1072.0" y="1082.0" width="15.9" height="15.7" fill="rgb(254,222,175)"/>
<rect x="1086.9" y="1082.0" width="15.9" height="15.7" fill="rgb(254,217,170)"/>
<rect x="685.2" y="1096.7" width="15.9" height="15.7" fill="rgb(124,254,217)"/>
<rect x="700.1" y="1096.7" width="15.9" height="15.7" fill="rgb(131,254,217)"/>
<rect x="715.0" y="1096.7" width="15.9" height="15.7" fill="rgb(138,254,216)"/>
<rect x="729.9" y="1096.7" width="15.9" height="15.7" fill="rgb(146,254,216)"/>
<rect x="744.8" y="1096.7" width="15.9" height="15.7" fill="rgb(153,254,216)"/>
<rect x="759.6" y="1096.7" width="15.9" height="15.7" fill="rgb(160,254,216)"/>
<rect x="774.5" y="1096.7" width="15.9" height="15.7" fill="rgb(167,254,216)"/>
<rect x="789.4" y="1096.7" width="15.9" height="15.7" fill="rgb(174,254,215)"/>
<rect x="804.2" y="1096.7" width="15.9" height="15.7" fill="rgb(180,254,215)"/>
<rect x="819.1" y="1096.7" width="15.9" height="15.7" fill="rgb(187,254,215)"/>
<rect x="834.0" y="1096.7" width="15.9" height="15.7" fill="rgb(194,254,215)"/>
<rect x="848.9" y="1096.7" width="15.9" height="15.7" fill="rgb(200,254,214)"/>
<rect x="863.8" y="1096.7" width="15.9" height="15.7" fill="rgb(207,254,214)"/>
<rect x="878.6" y="1096.7" width="15.9" height="15.7" fill="rgb(213,254,214)"/>
<rect x="893.5" y="1096.7" width="15.9" height="15.7" fill="rgb(220,254,214)"/>
<rect x="908.4" y="1096.7" width="15.9" height="15.7" fill="rgb(226,254,214)"/>
<rect x="923.2" y="1096.7" width="15.9" height="15.7" fill="rgb(233,254,213)"/>
<rect x="938.1" y="1096.7" width="15.9" height="15.7" fill="rgb(239,254,213)"/>
<rect x="953.0" y="1096.7" width="15.9" height="15.7" fill="rgb(246,254,213)"/>
<rect x="967.9" y="1096.7" width="15.9" height="15.7" fill="rgb(252,254,213)"/>
<rect x="982.8" y="1096.7" width="15.9" height="15.7" fill="rgb(254,251,209)"/>
<rect x="997.6" y="1096.7" width="15.9" height="15.7" fill="rgb(254,245,203)"/>
<rect x="1012.5" y="1096.7" width="15.9" height="15.7" fill="rgb(254,239,197)"/>
<rect x="1027.4" y="1096.7" width="15.9" height="15.7" fill="rgb(254,233,192)"/>
<rect x="1042.2" y="1096.7" width="15.9" height="15.7" fill="rgb(254,227,186)"/>
<rect x="1057.1" y="1096.7" width="15.9" height="15.7" fill="rgb(254,222,181)"/>
<rect x="1072.0" y="1096.7" width="15.9" height="15.7" fill="rgb(254,217,176)"/>
<rect x="1086.9" y="1096.7" width="15.9" height="15.7" fill="rgb(254,211,171)"/>
<rect x="685.2" y="1111.4" width="15.9" height="15.7" fill="rgb(129,254,222)"/>
<rect x="700.1" y="1111.4" width="15.9" height="15.7" fill="rgb(136,254,222)"/>
<rect x="715.0" y="1111.4" width="15.9" height="15.7" fill="rgb(144,254,222)"/>
<rect x="729.9" y="1111.4" width="15.9" height="15.7" fill="rgb(151,254,222)"/>
<rect x="744.8" y="1111.4" width="15.9" height="15.7" fill="rgb(158,254,222)"/>
<rect x="759.6" y="1111.4" width="15.9" height="15.7" fill="rgb(165,254,222)"/>
<rect x="774.5" y="1111.4" width="15.9" height="15.7" fill="rgb(172,254,221)"/>
<rect x="789.4" y="1111.4" width="15.9" height="15.7" fill="rgb(179,254,221)"/>
<rect x="804.2" y="1111.4" width="15.9" height="15.7" fill="rgb(186,254,221)"/>
<rect x="819.1" y="1111.4" width="15.9" height="15.7" fill="rgb(193,254,221)"/>
<rect x="834.0" y="1111.4" width="15.9" height="15.7" fill="rgb(199,254,221)"/>
<rect x="848.9" y="1111.4" width="15.9" height="15.7" fill="rgb(206,254,220)"/>
<rect x="863.8" y="1111.4" width="15.9" height="15.7" fill="rgb(212,254,220)"/>
<rect x="878.6" y="1111.4" width="15.9" height="15.7" fill="rgb(219,254,220)"/>
<rect x="893.5" y="1111.4" width="15.9" height="15.7" fill="rgb(226,254,220)"/>
<rect x="908.4" y="1111.4" width="15.9" height="15.7" fill="rgb(232,254,220)"/>
<rect x="923.2" y="1111.4" width="15.9" height="15.7" fill="rgb(238,254,219)"/>
<rect x="938.1" y="1111.4" width="15.9" height="15.7" fill="rgb(245,254,219)"/>
<rect x="953.0" y="1111.4" width="15.9" height="15.7" fill="rgb(251,254,219)"/>
<rect x="967.9" y="1111.4" width="15.9" height="15.7" fill="rgb(254,251,216)"/>
<rect x="982.8" y="1111.4" width="15.9" height="15.7" fill="rgb(254,245,210)"/>
<rect x="997.6" y="1111.4" width="15.9" height="15.7" fill="rgb(254,239,204)"/>
<rect x="1012.5" y="1111.4" width="15.9" height="15.7" fill="rgb(254,233,198)"/>
<rect x="1027.4" y="1111.4" width="15.9" height="15.7" fill="rgb(254,228,193)"/>
<rect x="1042.2" y="1111.4" width="15.9" height="15.7" fill="rgb(254,222,187)"/>
<rect x="1057.1" y="1111.4" width="15.9" height="15.7" fill="rgb(254,217,182)"/>
<rect x="1072.0" y="1111.4" width="15.9" height="15.7" fill="rgb(254,211,177)"/>
<rect x="1086.9" y="1111.4" width="15.9" height="15.7" fill="rgb(254,206,172)"/>
<rect x="685.2" y="1126.1" width="15.9" height="15.7" fill="rgb(134,254,228)"/>
<rect x="700.1" y="1126.1" width="15.9" height="15.7" fill="rgb(142,254,228)"/>
<rect x="715.0" y="1126.1" width="15.9" height="15.7" fill="rgb(149,254,228)"/>
<rect x="729.9" y="1126.1" width="15.9" height="15.7" fill="rgb(156,254,228)"/>
<rect x="744.8" y="1126.1" width="15.9" height="15.7" fill="rgb(163,254,228)"/>
<rect x="759.6" y="1126.1" width="15.9" height="15.7" fill="rgb(170,254,227)"/>
<rect x="774.5" y="1126.1" width="15.9" height="15.7" fill="rgb(177,254,227)"/>
<rect x="789.4" y="1126.1" width="15.9" height="15.7" fill="rgb(184,254,227)"/>
<rect x="804.2" y="1126.1" width="15.9" height="15.7" fill="rgb(191,254,227)"/>
<rect x="819.1" y="1126.1" width="15.9" height="15.7" fill="rgb(198,254,227)"/>
<rect x="834.0" y="1126.1" width="15.9" height="15.7" fill="rgb(205,254,227)"/>
<rect x="848.9" y="1126.1" width="15.9" height="15.7" fill="rgb(211,254,226)"/>
<rect x="863.8" y="1126.1" width="15.9" height="15.7" fill="rgb(218,254,226)"/>
<rect x="878.6" y="1126.1" width="15.9" height="15.7" fill="rgb(225,254,226)"/>
<rect x="893.5" y="1126.1" width="15.9" height="15.7" fill="rgb(231,254,226)"/>
<rect x="908.4" y="1126.1" width="15.9" height="15.7" fill="rgb(238,254,226)"/>
<rect x="923.2" y="1126.1" width="15.9" height="15.7" fill="rgb(244,254,226)"/>
<rect x="938.1" y="1126.1" width="15.9" height="15.7" fill="rgb(251,254,225)"/>
<rect x="953.0" y="1126.1" width="15.9" height="15.7" fill="rgb(254,252,223)"/>
<rect x="967.9" y="1126.1" width="15.9" height="15.7" fill="rgb(254,246,217)"/>
<rect x="982.8" y="1126.1" width="15.9" height="15.7" fill="rgb(254,240,211)"/>
<rect x="997.6" y="1126.1" width="15.9" height="15.7" fill="rgb(254,234,205)"/>
<rect x="1012.5" y="1126.1" width="15.9" height="15.7" fill="rgb(254,228,199)"/>
<rect x="1027.4" y="1126.1" width="15.9" height="15.7" fill="rgb(254,222,194)"/>
<rect x="1042.2" y="1126.1" width="15.9" height="15.7" fill="rgb(254,217,189)"/>
<rect x="1057.1" y="1126.1" width="15.9" height="15.7" fill="rgb(254,211,183)"/>
<rect x="1072.0" y="1126.1" width="15.9" height="15.7" fill="rgb(254,206,178)"/>
<rect x="1086.9" y="1126.1" width="15.9" height="15.7" fill="rgb(254,201,173)"/>
<rect x="685.2" y="1140.8" width="15.9" height="15.7" fill="rgb(140,254,234)"/>
<rect x="700.1" y="1140.8" width="15.9" height="15.7" fill="rgb(147,254,234)"/>
<rect x="715.0" y="1140.8" width="15.9" height="15.7" fill="rgb(154,254,234)"/>
<rect x="729.9" y="1140.8" width="15.9" height="15.7" fill="rgb(162,254,234)"/>
<rect x="744.8" y="1140.8" width="15.9" height="15.7" fill="rgb(169,254,233)"/>
<rect x="759.6" y="1140.8" width="15.9" height="15.7" fill="rgb(176,254,233)"/>
<rect x="774.5" y="1140.8" width="15.9" height="15.7" fill="rgb(183,254,233)"/>
<rect x="789.4" y="1140.8" width="15.9" height="15.7" fill="rgb(190,254,233)"/>
<rect x="804.2" y="1140.8" width="15.9" height="15.7" fill="rgb(197,254,233)"/>
<rect x="819.1" y="1140.8" width="15.9" height="15.7" fill="rgb(204,254,233)"/>
<rect x="834.0" y="1140.8" width="15.9" height="15.7" fill="rgb(210,254,233)"/>
<rect x="848.9" y="1140.8" width="15.9" height="15.7" fill="rgb(217,254,233)"/>
<rect x="863.8" y="1140.8" width="15.9" height="15.7" fill="rgb(224,254,233)"/>
<rect x="878.6" y="1140.8" width="15.9" height="15.7" fill="rgb(230,254,232)"/>
<rect x="893.5" y="1140.8" width="15.9" height="15.7" fill="rgb(237,254,232)"/>
<rect x="908.4" y="1140.8" width="15.9" height="15.7" fill="rgb(244,254,232)"/>
<rect x="923.2" y="1140.8" width="15.9" height="15.7" fill="rgb(250,254,232)"/>
<rect x="938.1" y="1140.8" width="15.9" height="15.7" fill="rgb(254,252,230)"/>
<rect x="953.0" y="1140.8" width="15.9" height="15.7" fill="rgb(254,246,224)"/>
<rect x="967.9" y="1140.8" width="15.9" height="15.7" fill="rgb(254,240,218)"/>
<rect x="982.8" y="1140.8" width="15.9" height="15.7" fill="rgb(254,234,212)"/>
<rect x="997.6" y="1140.8" width="15.9" height="15.7" fill="rgb(254,228,206)"/>
<rect x="1012.5" y="1140.8" width="15.9" height="15.7" fill="rgb(254,222,200)"/>
<rect x="1027.4" y="1140.8" width="15.9" height="15.7" fill="rgb(254,217,195)"/>
<rect x="1042.2" y="1140.8" width="15.9" height="15.7" fill="rgb(254,211,190)"/>
<rect x="1057.1" y="1140.8" width="15.9" height="15.7" fill="rgb(254,206,184)"/>
<rect x="1072.0" y="1140.8" width="15.9" height="15.7" fill="rgb(254,201,179)"/>
<rect x="1086.9" y="1140.8" width="15.9" height="15.7" fill="rgb(254,196,174)"/>
<rect x="685.2" y="1155.4" width="15.9" height="15.7" fill="rgb(145,254,240)"/>
<rect x="700.1" y="1155.4" width="15.9" height="15.7" fill="rgb(153,254,240)"/>
<rect x="715.0" y="1155.4" width="15.9" height="15.7" fill="rgb(160,254,240)"/>
<rect x="729.9" y="1155.4" width="15.9" height="15.7" fill="rgb(167,254,240)"/>
<rect x="744.8" y="1155.4" width="15.9" height="15.7" fill="rgb(174,254,239)"/>
<rect x="759.6" y="1155.4" width="15.9" height="15.7" fill="rgb(182,254,239)"/>
<rect x="774.5" y="1155.4" width="15.9" height="15.7" fill="rgb(189,254,239)"/>
<rect x="789.4" y="1155.4" width="15.9" height="15.7" fill="rgb(196,254,239)"/>
<rect x="804.2" y="1155.4" width="15.9" height="15.7" fill="rgb(202,254,239)"/>
<rect x="819.1" y="1155.4" width="15.9" height="15.7" fill="rgb(209,254,239)"/>
<rect x="834.0" y="1155.4" width="15.9" height="15.7" fill="rgb(216,254,239)"/>
<rect x="848.9" y="1155.4" width="15.9" height="15.7" fill="rgb(223,254,239)"/>
<rect x="863.8" y="1155.4" width="15.9" height="15.7" fill="rgb(230,254,239)"/>
<rect x="878.6" y="1155.4" width="15.9" height="15.7" fill="rgb(236,254,239)"/>
<rect x="893.5" y="1155.4" width="15.9" height="15.7" fill="rgb(243,254,239)"/>
<rect x="908.4" y="1155.4" width="15.9" height="15.7" fill="rgb(250,254,239)"/>
<rect x="923.2" y="1155.4" width="15.9" height="15.7" fill="rgb(254,253,237)"/>
<rect x="938.1" y="1155.4" width="15.9" height="15.7" fill="rgb(254,246,231)"/>
<rect x="953.0" y="1155.4" width="15.9" height="15.7" fill="rgb(254,240,224)"/>
<rect x="967.9" y="1155.4" width="15.9" height="15.7" fill="rgb(254,234,218)"/>
<rect x="982.8" y="1155.4" width="15.9" height="15.7" fill="rgb(254,228,213)"/>
<rect x="997.6" y="1155.4" width="15.9" height="15.7" fill="rgb(254,222,207)"/>
<rect x="1012.5" y="1155.4" width="15.9" height="15.7" fill="rgb(254,217,201)"/>
<rect x="1027.4" y="1155.4" width="15.9" height="15.7" fill="rgb(254,211,196)"/>
<rect x="1042.2" y="1155.4" width="15.9" height="15.7" fill="rgb(254,206,191)"/>
<rect x="1057.1" y="1155.4" width="15.9" height="15.7" fill="rgb(254,201,186)"/>
<rect x="1072.0" y="1155.4" width="15.9" height="15.7" fill="rgb(254,196,181)"/>
<rect x="1086.9" y="1155.4" width="15.9" height="15.7" fill="rgb(254,191,176)"/>
<rect x="685.2" y="1170.1" width="15.9" height="15.7" fill="rgb(151,254,246)"/>
<rect x="700.1" y="1170.1" width="15.9" height="15.7" fill="rgb(158,254,246)"/>
<rect x="715.0" y="1170.1" width="15.9" height="15.7" fill="rgb(166,254,246)"/>
<rect x="729.9" y="1170.1" width="15.9" height="15.7" fill="rgb(173,254,246)"/>
<rect x="744.8" y="1170.1" width="15.9" height="15.7" fill="rgb(180,254,246)"/>
<rect x="759.6" y="1170.1" width="15.9" height="15.7" fill="rgb(187,254,246)"/>
<rect x="774.5" y="1170.1" width="15.9" height="15.7" fill="rgb(194,254,245)"/>
<rect x="789.4" y="1170.1" width="15.9" height="15.7" fill="rgb(201,254,245)"/>
<rect x="804.2" y="1170.1" width="15.9" height="15.7" fill="rgb(208,254,245)"/>
<rect x="819.1" y="1170.1" width="15.9" height="15.7" fill="rgb(215,254,245)"/>
<rect x="834.0" y="1170.1" width="15.9" height="15.7" fill="rgb(222,254,245)"/>
<rect x="848.9" y="1170.1" width="15.9" height="15.7" fill="rgb(229,254,245)"/>
<rect x="863.8" y="1170.1" width="15.9" height="15.7" fill="rgb(236,254,245)"/>
<rect x="878.6" y="1170.1" width="15.9" height="15.7" fill="rgb(242,254,245)"/>
<rect x="893.5" y="1170.1" width="15.9" height="15.7" fill="rgb(249,254,245)"/>
<rect x="908.4" y="1170.1" width="15.9" height="15.7" fill="rgb(254,253,244)"/>
<rect x="923.2" y="1170.1" width="15.9" height="15.7" fill="rgb(254,247,238)"/>
<rect x="938.1" y="1170.1" width="15.9" height="15.7" fill="rgb(254,241,231)"/>
<rect x="953.0" y="1170.1" width="15.9" height="15.7" fill="rgb(254,234,225)"/>
<rect x="967.9" y="1170.1" width="15.9" height="15.7" fill="rgb(254,228,219)"/>
<rect x="982.8" y="1170.1" width="15.9" height="15.7" fill="rgb(254,223,213)"/>
<rect x="997.6" y="1170.1" width="15.9" height="15.7" fill="rgb(254,217,208)"/>
<rect x="1012.5" y="1170.1" width="15.9" height="15.7" fill="rgb(254,211,202)"/>
<rect x="1027.4" y="1170.1" width="15.9" height="15.7" fill="rgb(254,206,197)"/>
<rect x="1042.2" y="1170.1" width="15.9" height="15.7" fill="rgb(254,201,192)"/>
<rect x="1057.1" y="1170.1" width="15.9" height="15.7" fill="rgb(254,195,187)"/>
<rect x="1072.0" y="1170.1" width="15.9" height="15.7" fill="rgb(254,190,182)"/>
<rect x="1086.9" y="1170.1" width="15.9" height="15.7" fill="rgb(254,185,177)"/>
<rect x="685.2" y="1184.8" width="15.9" height="15.7" fill="rgb(156,254,252)"/>
<rect x="700.1" y="1184.8" width="15.9" height="15.7" fill="rgb(164,254,252)"/>
<rect x="715.0" y="1184.8" width="15.9" height="15.7" fill="rgb(171,254,252)"/>
<rect x="729.9" y="1184.8" width="15.9" height="15.7" fill="rgb(179,254,252)"/>
<rect x="744.8" y="1184.8" width="15.9" height="15.7" fill="rgb(186,254,252)"/>
<rect x="759.6" y="1184.8" width="15.9" height="15.7" fill="rgb(193,254,252)"/>
<rect x="774.5" y="1184.8" width="15.9" height="15.7" fill="rgb(200,254,252)"/>
<rect x="789.4" y="1184.8" width="15.9" height="15.7" fill="rgb(207,254,252)"/>
<rect x="804.2" y="1184.8" width="15.9" height="15.7" fill="rgb(214,254,252)"/>
<rect x="819.1" y="1184.8" width="15.9" height="15.7" fill="rgb(221,254,252)"/>
<rect x="834.0" y="1184.8" width="15.9" height="15.7" fill="rgb(228,254,252)"/>
<rect x="848.9" y="1184.8" width="15.9" height="15.7" fill="rgb(235,254,252)"/>
<rect x="863.8" y="1184.8" width="15.9" height="15.7" fill="rgb(242,254,252)"/>
<rect x="878.6" y="1184.8" width="15.9" height="15.7" fill="rgb(248,254,252)"/>
<rect x="893.5" y="1184.8" width="15.9" height="15.7" fill="rgb(254,254,251)"/>
<rect x="908.4" y="1184.8" width="15.9" height="15.7" fill="rgb(254,247,245)"/>
<rect x="923.2" y="1184.8" width="15.9" height="15.7" fill="rgb(254,241,238)"/>
<rect x="938.1" y="1184.8" width="15.9" height="15.7" fill="rgb(254,235,232)"/>
<rect x="953.0" y="1184.8" width="15.9" height="15.7" fill="rgb(254,229,226)"/>
<rect x="967.9" y="1184.8" width="15.9" height="15.7" fill="rgb(254,223,220)"/>
<rect x="982.8" y="1184.8" width="15.9" height="15.7" fill="rgb(254,217,214)"/>
<rect x="997.6" y="1184.8" width="15.9" height="15.7" fill="rgb(254,211,209)"/>
<rect x="1012.5" y="1184.8" width="15.9" height="15.7" fill="rgb(254,206,203)"/>
<rect x="1027.4" y="1184.8" width="15.9" height="15.7" fill="rgb(254,201,198)"/>
<rect x="1042.2" y="1184.8" width="15.9" height="15.7" fill="rgb(254,195,193)"/>
<rect x="1057.1" y="1184.8" width="15.9" height="15.7" fill="rgb(254,190,188)"/>
<rect x="1072.0" y="1184.8" width="15.9" height="15.7" fill="rgb(254,185,183)"/>
<rect x="1086.9" y="1184.8" width="15.9" height="15.7" fill="rgb(254,180,178)"/>
<rect x="685.2" y="1199.5" width="15.9" height="15.7" fill="rgb(159,251,254)"/>
<rect x="700.1" y="1199.5" width="15.9" height="15.7" fill="rgb(167,251,254)"/>
<rect x="715.0" y="1199.5" width="15.9" height="15.7" fill="rgb(174,251,254)"/>
<rect x="729.9" y="1199.5" width="15.9" height="15.7" fill="rgb(181,251,254)"/>
<rect x="744.8" y="1199.5" width="15.9" height="15.7" fill="rgb(188,251,254)"/>
<rect x="759.6" y="1199.5" width="15.9" height="15.7" fill="rgb(196,251,254)"/>
<rect x="774.5" y="1199.5" width="15.9" height="15.7" fill="rgb(203,251,254)"/>
<rect x="789.4" y="1199.5" width="15.9" height="15.7" fill="rgb(210,251,254)"/>
<rect x="804.2" y="1199.5" width="15.9" height="15.7" fill="rgb(217,251,254)"/>
<rect x="819.1" y="1199.5" width="15.9" height="15.7" fill="rgb(224,251,254)"/>
<rect x="834.0" y="1199.5" width="15.9" height="15.7" fill="rgb(230,251,254)"/>
<rect x="848.9" y="1199.5" width="15.9" height="15.7" fill="rgb(237,251,254)"/>
<rect x="863.8" y="1199.5" width="15.9" height="15.7" fill="rgb(244,251,254)"/>
<rect x="878.6" y="1199.5" width="15.9" height="15.7" fill="rgb(251,251,254)"/>
<rect x="893.5" y="1199.5" width="15.9" height="15.7" fill="rgb(254,248,252)"/>
<rect x="908.4" y="1199.5" width="15.9" height="15.7" fill="rgb(254,241,245)"/>
<rect x="923.2" y="1199.5" width="15.9" height="15.7" fill="rgb(254,235,239)"/>
<rect x="938.1" y="1199.5" width="15.9" height="15.7" fill="rgb(254,229,233)"/>
<rect x="953.0" y="1199.5" width="15.9" height="15.7" fill="rgb(254,223,227)"/>
<rect x="967.9" y="1199.5" width="15.9" height="15.7" fill="rgb(254,217,221)"/>
<rect x="982.8" y="1199.5" width="15.9" height="15.7" fill="rgb(254,211,215)"/>
<rect x="997.6" y="1199.5" width="15.9" height="15.7" fill="rgb(254,206,210)"/>
<rect x="1012.5" y="1199.5" width="15.9" height="15.7" fill="rgb(254,200,204)"/>
<rect x="1027.4" y="1199.5" width="15.9" height="15.7" fill="rgb(254,195,199)"/>
<rect x="1042.2" y="1199.5" width="15.9" height="15.7" fill="rgb(254,190,194)"/>
<rect x="1057.1" y="1199.5" width="15.9" height="15.7" fill="rgb(254,185,189)"/>
<rect x="1072.0" y="1199.5" width="15.9" height="15.7" fill="rgb(254,180,184)"/>
<rect x="1086.9" y="1199.5" width="15.9" height="15.7" fill="rgb(254,175,179)"/>
<rect x="685.2" y="1214.2" width="15.9" height="15.7" fill="rgb(160,245,254)"/>
<rect x="700.1" y="1214.2" width="15.9" height="15.7" fill="rgb(167,245,254)"/>
<rect x="715.0" y="1214.2" width="15.9" height="15.7" fill="rgb(175,245,254)"/>
<rect x="729.9" y="1214.2" width="15.9" height="15.7" fill="rgb(182,245,254)"/>
<rect x="744.8" y="1214.2" width="15.9" height="15.7" fill="rgb(189,245,254)"/>
<rect x="759.6" y="1214.2" width="15.9" height="15.7" fill="rgb(196,245,254)"/>
<rect x="774.5" y="1214.2" width="15.9" height="15.7" fill="rgb(203,245,254)"/>
<rect x="789.4" y="1214.2" width="15.9" height="15.7" fill="rgb(210,245,254)"/>
<rect x="804.2" y="1214.2" width="15.9" height="15.7" fill="rgb(217,244,254)"/>
<rect x="819.1" y="1214.2" width="15.9" height="15.7" fill="rgb(223,244,254)"/>
<rect x="834.0" y="1214.2" width="15.9" height="15.7" fill="rgb(230,244,254)"/>
<rect x="848.9" y="1214.2" width="15.9" height="15.7" fill="rgb(237,244,254)"/>
<rect x="863.8" y="1214.2" width="15.9" height="15.7" fill="rgb(244,244,254)"/>
<rect x="878.6" y="1214.2" width="15.9" height="15.7" fill="rgb(250,244,254)"/>
<rect x="893.5" y="1214.2" width="15.9" height="15.7" fill="rgb(254,242,252)"/>
<rect x="908.4" y="1214.2" width="15.9" height="15.7" fill="rgb(254,235,246)"/>
<rect x="923.2" y="1214.2" width="15.9" height="15.7" fill="rgb(254,229,239)"/>
<rect x="938.1" y="1214.2" width="15.9" height="15.7" fill="rgb(254,223,233)"/>
<rect x="953.0" y="1214.2" width="15.9" height="15.7" fill="rgb(254,217,227)"/>
<rect x="967.9" y="1214.2" width="15.9" height="15.7" fill="rgb(254,211,222)"/>
<rect x="982.8" y="1214.2" width="15.9" height="15.7" fill="rgb(254,206,216)"/>
<rect x="997.6" y="1214.2" width="15.9" height="15.7" fill="rgb(254,200,210)"/>
<rect x="1012.5" y="1214.2" width="15.9" height="15.7" fill="rgb(254,195,205)"/>
<rect x="1027.4" y="1214.2" width="15.9" height="15.7" fill="rgb(254,190,200)"/>
<rect x="1042.2" y="1214.2" width="15.9" height="15.7" fill="rgb(254,185,195)"/>
<rect x="1057.1" y="1214.2" width="15.9" height="15.7" fill="rgb(254,180,190)"/>
<rect x="1072.0" y="1214.2" width="15.9" height="15.7" fill="rgb(254,175,185)"/>
<rect x="1086.9" y="1214.2" width="15.9" height="15.7" fill="rgb(254,170,180)"/>
<rect x="685.2" y="1228.9" width="15.9" height="15.7" fill="rgb(161,239,254)"/>
<rect x="700.1" y="1228.9" width="15.9" height="15.7" fill="rgb(168,239,254)"/>
<rect x="715.0" y="1228.9" width="15.9" height="15.7" fill="rgb(175,239,254)"/>
<rect x="729.9" y="1228.9" width="15.9" height="15.7" fill="rgb(182,239,254)"/>
<rect x="744.8" y="1228.9" width="15.9" height="15.7" fill="rgb(189,239,254)"/>
<rect x="759.6" y="1228.9" width="15.9" height="15.7" fill="rgb(196,238,254)"/>
<rect x="774.5" y="1228.9" width="15.9" height="15.7" fill="rgb(203,238,254)"/>
<rect x="789.4" y="1228.9" width="15.9" height="15.7" fill="rgb(210,238,254)"/>
<rect x="804.2" y="1228.9" width="15.9" height="15.7" fill="rgb(217,238,254)"/>
<rect x="819.1" y="1228.9" width="15.9" height="15.7" fill="rgb(223,238,254)"/>
<rect x="834.0" y="1228.9" width="15.9" height="15.7" fill="rgb(230,238,254)"/>
<rect x="848.9" y="1228.9" width="15.9" height="15.7" fill="rgb(237,238,254)"/>
<rect x="863.8" y="1228.9" width="15.9" height="15.7" fill="rgb(243,238,254)"/>
<rect x="878.6" y="1228.9" width="15.9" height="15.7" fill="rgb(250,237,254)"/>
<rect x="893.5" y="1228.9" width="15.9" height="15.7" fill="rgb(254,236,253)"/>
<rect x="908.4" y="1228.9" width="15.9" height="15.7" fill="rgb(254,229,246)"/>
<rect x="923.2" y="1228.9" width="15.9" height="15.7" fill="rgb(254,223,240)"/>
<rect x="938.1" y="1228.9" width="15.9" height="15.7" fill="rgb(254,217,234)"/>
<rect x="953.0" y="1228.9" width="15.9" height="15.7" fill="rgb(254,211,228)"/>
<rect x="967.9" y="1228.9" width="15.9" height="15.7" fill="rgb(254,206,222)"/>
<rect x="982.8" y="1228.9" width="15.9" height="15.7" fill="rgb(254,200,217)"/>
<rect x="997.6" y="1228.9" width="15.9" height="15.7" fill="rgb(254,195,211)"/>
<rect x="1012.5" y="1228.9" width="15.9" height="15.7" fill="rgb(254,189,206)"/>
<rect x="1027.4" y="1228.9" width="15.9" height="15.7" fill="rgb(254,184,201)"/>
<rect x="1042.2" y="1228.9" width="15.9" height="15.7" fill="rgb(254,179,196)"/>
<rect x="1057.1" y="1228.9" width="15.9" height="15.7" fill="rgb(254,174,191)"/>
<rect x="1072.0" y="1228.9" width="15.9" height="15.7" fill="rgb(254,170,186)"/>
<rect x="1086.9" y="1228.9" width="15.9" height="15.7" fill="rgb(254,165,181)"/>
<rect x="685.2" y="1243.6" width="15.9" height="15.7" fill="rgb(161,233,254)"/>
<rect x="700.1" y="1243.6" width="15.9" height="15.7" fill="rgb(168,233,254)"/>
<rect x="715.0" y="1243.6" width="15.9" height="15.7" fill="rgb(175,233,254)"/>
<rect x="729.9" y="1243.6" width="15.9" height="15.7" fill="rgb(182,232,254)"/>
<rect x="744.8" y="1243.6" width="15.9" height="15.7" fill="rgb(189,232,254)"/>
<rect x="759.6" y="1243.6" width="15.9" height="15.7" fill="rgb(196,232,254)"/>
<rect x="774.5" y="1243.6" width="15.9" height="15.7" fill="rgb(203,232,254)"/>
<rect x="789.4" y="1243.6" width="15.9" height="15.7" fill="rgb(210,232,254)"/>
<rect x="804.2" y="1243.6" width="15.9" height="15.7" fill="rgb(216,232,254)"/>
<rect x="819.1" y="1243.6" width="15.9" height="15.7" fill="rgb(223,232,254)"/>
<rect x="834.0" y="1243.6" width="15.9" height="15.7" fill="rgb(230,231,254)"/>
<rect x="848.9" y="1243.6" width="15.9" height="15.7" fill="rgb(236,231,254)"/>
<rect x="863.8" y="1243.6" width="15.9" height="15.7" fill="rgb(243,231,254)"/>
<rect x="878.6" y="1243.6" width="15.9" height="15.7" fill="rgb(249,231,254)"/>
<rect x="893.5" y="1243.6" width="15.9" height="15.7" fill="rgb(254,229,253)"/>
<rect x="908.4" y="1243.6" width="15.9" height="15.7" fill="rgb(254,223,247)"/>
<rect x="923.2" y="1243.6" width="15.9" height="15.7" fill="rgb(254,217,241)"/>
<rect x="938.1" y="1243.6" width="15.9" height="15.7" fill="rgb(254,211,235)"/>
<rect x="953.0" y="1243.6" width="15.9" height="15.7" fill="rgb(254,206,229)"/>
<rect x="967.9" y="1243.6" width="15.9" height="15.7" fill="rgb(254,200,223)"/>
<rect x="982.8" y="1243.6" width="15.9" height="15.7" fill="rgb(254,195,218)"/>
<rect x="997.6" y="1243.6" width="15.9" height="15.7" fill="rgb(254,189,212)"/>
<rect x="1012.5" y="1243.6" width="15.9" height="15.7" fill="rgb(254,184,207)"/>
<rect x="1027.4" y="1243.6" width="15.9" height="15.7" fill="rgb(254,179,202)"/>
<rect x="1042.2" y="1243.6" width="15.9" height="15.7" fill="rgb(254,174,197)"/>
<rect x="1057.1" y="1243.6" width="15.9" height="15.7" fill="rgb(254,169,192)"/>
<rect x="1072.0" y="1243.6" width="15.9" height="15.7" fill="rgb(254,164,187)"/>
<rect x="1086.9" y="1243.6" width="15.9" height="15.7" fill="rgb(254,160,182)"/>
<rect x="685.2" y="1258.2" width="15.9" height="15.7" fill="rgb(162,227,254)"/>
<rect x="700.1" y="1258.2" width="15.9" height="15.7" fill="rgb(169,227,254)"/>
<rect x="715.0" y="1258.2" width="15.9" height="15.7" fill="rgb(176,227,254)"/>
<rect x="729.9" y="1258.2" width="15.9" height="15.7" fill="rgb(183,226,254)"/>
<rect x="744.8" y="1258.2" width="15.9" height="15.7" fill="rgb(190,226,254)"/>
<rect x="759.6" y="1258.2" width="15.9" height="15.7" fill="rgb(196,226,254)"/>
<rect x="774.5" y="1258.2" width="15.9" height="15.7" fill="rgb(203,226,254)"/>
<rect x="789.4" y="1258.2" width="15.9" height="15.7" fill="rgb(210,226,254)"/>
<rect x="804.2" y="1258.2" width="15.9" height="15.7" fill="rgb(216,225,254)"/>
<rect x="819.1" y="1258.2" width="15.9" height="15.7" fill="rgb(223,225,254)"/>
<rect x="834.0" y="1258.2" width="15.9" height="15.7" fill="rgb(230,225,254)"/>
<rect x="848.9" y="1258.2" width="15.9" height="15.7" fill="rgb(236,225,254)"/>
<rect x="863.8" y="1258.2" width="15.9" height="15.7" fill="rgb(243,225,254)"/>
<rect x="878.6" y="1258.2" width="15.9" height="15.7" fill="rgb(249,224,254)"/>
<rect x="893.5" y="1258.2" width="15.9" height="15.7" fill="rgb(254,223,254)"/>
<rect x="908.4" y="1258.2" width="15.9" height="15.7" fill="rgb(254,217,247)"/>
<rect x="923.2" y="1258.2" width="15.9" height="15.7" fill="rgb(254,211,241)"/>
<rect x="938.1" y="1258.2" width="15.9" height="15.7" fill="rgb(254,206,235)"/>
<rect x="953.0" y="1258.2" width="15.9" height="15.7" fill="rgb(254,200,229)"/>
<rect x="967.9" y="1258.2" width="15.9" height="15.7" fill="rgb(254,194,224)"/>
<rect x="982.8" y="1258.2" width="15.9" height="15.7" fill="rgb(254,189,218)"/>
<rect x="997.6" y="1258.2" width="15.9" height="15.7" fill="rgb(254,184,213)"/>
<rect x="1012.5" y="1258.2" width="15.9" height="15.7" fill="rgb(254,179,208)"/>
<rect x="1027.4" y="1258.2" width="15.9" height="15.7" fill="rgb(254,173,203)"/>
<rect x="1042.2" y="1258.2" width="15.9" height="15.7" fill="rgb(254,169,198)"/>
<rect x="1057.1" y="1258.2" width="15.9" height="15.7" fill="rgb(254,164,193)"/>
<rect x="1072.0" y="1258.2" width="15.9" height="15.7" fill="rgb(254,159,188)"/>
<rect x="1086.9" y="1258.2" width="15.9" height="15.7" fill="rgb(254,154,183)"/>
<rect x="685.2" y="1272.9" width="15.9" height="15.7" fill="rgb(162,221,254)"/>
<rect x="700.1" y="1272.9" width="15.9" height="15.7" fill="rgb(169,221,254)"/>
<rect x="715.0" y="1272.9" width="15.9" height="15.7" fill="rgb(176,220,254)"/>
<rect x="729.9" y="1272.9" width="15.9" height="15.7" fill="rgb(183,220,254)"/>
<rect x="744.8" y="1272.9" width="15.9" height="15.7" fill="rgb(190,220,254)"/>
<rect x="759.6" y="1272.9" width="15.9" height="15.7" fill="rgb(197,220,254)"/>
<rect x="774.5" y="1272.9" width="15.9" height="15.7" fill="rgb(203,220,254)"/>
<rect x="789.4" y="1272.9" width="15.9" height="15.7" fill="rgb(210,219,254)"/>
<rect x="804.2" y="1272.9" width="15.9" height="15.7" fill="rgb(216,219,254)"/>
<rect x="819.1" y="1272.9" width="15.9" height="15.7" fill="rgb(223,219,254)"/>
<rect x="834.0" y="1272.9" width="15.9" height="15.7" fill="rgb(229,219,254)"/>
<rect x="848.9" y="1272.9" width="15.9" height="15.7" fill="rgb(236,218,254)"/>
<rect x="863.8" y="1272.9" width="15.9" height="15.7" fill="rgb(242,218,254)"/>
<rect x="878.6" y="1272.9" width="15.9" height="15.7" fill="rgb(249,218,254)"/>
<rect x="893.5" y="1272.9" width="15.9" height="15.7" fill="rgb(254,217,254)"/>
<rect x="908.4" y="1272.9" width="15.9" height="15.7" fill="rgb(254,211,248)"/>
<rect x="923.2" y="1272.9" width="15.9" height="15.7" fill="rgb(254,205,242)"/>
<rect x="938.1" y="1272.9" width="15.9" height="15.7" fill="rgb(254,200,236)"/>
<rect x="953.0" y="1272.9" width="15.9" height="15.7" fill="rgb(254,194,230)"/>
<rect x="967.9" y="1272.9" width="15.9" height="15.7" fill="rgb(254,189,225)"/>
<rect x="982.8" y="1272.9" width="15.9" height="15.7" fill="rgb(254,183,219)"/>
<rect x="997.6" y="1272.9" width="15.9" height="15.7" fill="rgb(254,178,214)"/>
<rect x="1012.5" y="1272.9" width="15.9" height="15.7" fill="rgb(254,173,208)"/>
<rect x="1027.4" y="1272.9" width="15.9" height="15.7" fill="rgb(254,168,203)"/>
<rect x="1042.2" y="1272.9" width="15.9" height="15.7" fill="rgb(254,163,198)"/>
<rect x="1057.1" y="1272.9" width="15.9" height="15.7" fill="rgb(254,158,194)"/>
<rect x="1072.0" y="1272.9" width="15.9" height="15.7" fill="rgb(254,154,189)"/>
<rect x="1086.9" y="1272.9" width="15.9" height="15.7" fill="rgb(254,149,184)"/>
<rect x="685.2" y="1287.6" width="15.9" height="15.7" fill="rgb(163,215,254)"/>
<rect x="700.1" y="1287.6" width="15.9" height="15.7" fill="rgb(170,215,254)"/>
<rect x="715.0" y="1287.6" width="15.9" height="15.7" fill="rgb(177,214,254)"/>
<rect x="729.9" y="1287.6" width="15.9" height="15.7" fill="rgb(183,214,254)"/>
<rect x="744.8" y="1287.6" width="15.9" height="15.7" fill="rgb(190,214,254)"/>
<rect x="759.6" y="1287.6" width="15.9" height="15.7" fill="rgb(197,214,254)"/>
<rect x="774.5" y="1287.6" width="15.9" height="15.7" fill="rgb(203,213,254)"/>
<rect x="789.4" y="1287.6" width="15.9" height="15.7" fill="rgb(210,213,254)"/>
<rect x="804.2" y="1287.6" width="15.9" height="15.7" fill="rgb(216,213,254)"/>
<rect x="819.1" y="1287.6" width="15.9" height="15.7" fill="rgb(223,213,254)"/>
<rect x="834.0" y="1287.6" width="15.9" height="15.7" fill="rgb(229,212,254)"/>
<rect x="848.9" y="1287.6" width="15.9" height="15.7" fill="rgb(236,212,254)"/>
<rect x="863.8" y="1287.6" width="15.9" height="15.7" fill="rgb(242,212,254)"/>
<rect x="878.6" y="1287.6" width="15.9" height="15.7" fill="rgb(248,212,254)"/>
<rect x="893.5" y="1287.6" width="15.9" height="15.7" fill="rgb(254,211,254)"/>
<rect x="908.4" y="1287.6" width="15.9" height="15.7" fill="rgb(254,205,248)"/>
<rect x="923.2" y="1287.6" width="15.9" height="15.7" fill="rgb(254,200,242)"/>
<rect x="938.1" y="1287.6" width="15.9" height="15.7" fill="rgb(254,194,236)"/>
<rect x="953.0" y="1287.6" width="15.9" height="15.7" fill="rgb(254,188,231)"/>
<rect x="967.9" y="1287.6" width="15.9" height="15.7" fill="rgb(254,183,225)"/>
<rect x="982.8" y="1287.6" width="15.9" height="15.7" fill="rgb(254,178,220)"/>
<rect x="997.6" y="1287.6" width="15.9" height="15.7" fill="rgb(254,173,214)"/>
<rect x="1012.5" y="1287.6" width="15.9" height="15.7" fill="rgb(254,168,209)"/>
<rect x="1027.4" y="1287.6" width="15.9" height="15.7" fill="rgb(254,163,204)"/>
<rect x="1042.2" y="1287.6" width="15.9" height="15.7" fill="rgb(254,158,199)"/>
<rect x="1057.1" y="1287.6" width="15.9" height="15.7" fill="rgb(254,153,194)"/>
<rect x="1072.0" y="1287.6" width="15.9" height="15.7" fill="rgb(254,148,190)"/>
<rect x="1086.9" y="1287.6" width="15.9" height="15.7" fill="rgb(254,144,185)"/>
<rect x="685.2" y="1302.3" width="15.9" height="15.7" fill="rgb(163,209,254)"/>
<rect x="700.1" y="1302.3" width="15.9" height="15.7" fill="rgb(170,209,254)"/>
<rect x="715.0" y="1302.3" width="15.9" height="15.7" fill="rgb(177,208,254)"/>
<rect x="729.9" y="1302.3" width="15.9" height="15.7" fill="rgb(184,208,254)"/>
<rect x="744.8" y="1302.3" width="15.9" height="15.7" fill="rgb(190,208,254)"/>
<rect x="759.6" y="1302.3" width="15.9" height="15.7" fill="rgb(197,208,254)"/>
<rect x="774.5" y="1302.3" width="15.9" height="15.7" fill="rgb(203,207,254)"/>
<rect x="789.4" y="1302.3" width="15.9" height="15.7" fill="rgb(210,207,254)"/>
<rect x="804.2" y="1302.3" width="15.9" height="15.7" fill="rgb(216,207,254)"/>
<rect x="819.1" y="1302.3" width="15.9" height="15.7" fill="rgb(223,206,254)"/>
<rect x="834.0" y="1302.3" width="15.9" height="15.7" fill="rgb(229,206,254)"/>
<rect x="848.9" y="1302.3" width="15.9" height="15.7" fill="rgb(235,206,254)"/>
<rect x="863.8" y="1302.3" width="15.9" height="15.7" fill="rgb(242,206,254)"/>
<rect x="878.6" y="1302.3" width="15.9" height="15.7" fill="rgb(248,205,254)"/>
<rect x="893.5" y="1302.3" width="15.9" height="15.7" fill="rgb(254,205,254)"/>
<rect x="908.4" y="1302.3" width="15.9" height="15.7" fill="rgb(254,199,249)"/>
<rect x="923.2" y="1302.3" width="15.9" height="15.7" fill="rgb(254,194,243)"/>
<rect x="938.1" y="1302.3" width="15.9" height="15.7" fill="rgb(254,188,237)"/>
<rect x="953.0" y="1302.3" width="15.9" height="15.7" fill="rgb(254,183,231)"/>
<rect x="967.9" y="1302.3" width="15.9" height="15.7" fill="rgb(254,177,226)"/>
<rect x="982.8" y="1302.3" width="15.9" height="15.7" fill="rgb(254,172,220)"/>
<rect x="997.6" y="1302.3" width="15.9" height="15.7" fill="rgb(254,167,215)"/>
<rect x="1012.5" y="1302.3" width="15.9" height="15.7" fill="rgb(254,162,210)"/>
<rect x="1027.4" y="1302.3" width="15.9" height="15.7" fill="rgb(254,157,205)"/>
<rect x="1042.2" y="1302.3" width="15.9" height="15.7" fill="rgb(254,152,200)"/>
<rect x="1057.1" y="1302.3" width="15.9" height="15.7" fill="rgb(254,148,195)"/>
<rect x="1072.0" y="1302.3" width="15.9" height="15.7" fill="rgb(254,143,191)"/>
<rect x="1086.9" y="1302.3" width="15.9" height="15.7" fill="rgb(254,139,186)"/>
<rect x="685.2" y="1317.0" width="15.9" height="15.7" fill="rgb(164,203,254)"/>
<rect x="700.1" y="1317.0" width="15.9" height="15.7" fill="rgb(171,203,254)"/>
<rect x="715.0" y="1317.0" width="15.9" height="15.7" fill="rgb(177,203,254)"/>
<rect x="729.9" y="1317.0" width="15.9" height="15.7" fill="rgb(184,202,254)"/>
<rect x="744.8" y="1317.0" width="15.9" height="15.7" fill="rgb(191,202,254)"/>
<rect x="759.6" y="1317.0" width="15.9" height="15.7" fill="rgb(197,202,254)"/>
<rect x="774.5" y="1317.0" width="15.9" height="15.7" fill="rgb(204,201,254)"/>
<rect x="789.4" y="1317.0" width="15.9" height="15.7" fill="rgb(210,201,254)"/>
<rect x="804.2" y="1317.0" width="15.9" height="15.7" fill="rgb(216,201,254)"/>
<rect x="819.1" y="1317.0" width="15.9" height="15.7" fill="rgb(223,200,254)"/>
<rect x="834.0" y="1317.0" width="15.9" height="15.7" fill="rgb(229,200,254)"/>
<rect x="848.9" y="1317.0" width="15.9" height="15.7" fill="rgb(235,200,254)"/>
<rect x="863.8" y="1317.0" width="15.9" height="15.7" fill="rgb(241,199,254)"/>
<rect x="878.6" y="1317.0" width="15.9" height="15.7" fill="rgb(247,199,254)"/>
<rect x="893.5" y="1317.0" width="15.9" height="15.7" fill="rgb(254,198,254)"/>
<rect x="908.4" y="1317.0" width="15.9" height="15.7" fill="rgb(254,193,249)"/>
<rect x="923.2" y="1317.0" width="15.9" height="15.7" fill="rgb(254,188,243)"/>
<rect x="938.1" y="1317.0" width="15.9" height="15.7" fill="rgb(254,182,238)"/>
<rect x="953.0" y="1317.0" width="15.9" height="15.7" fill="rgb(254,177,232)"/>
<rect x="967.9" y="1317.0" width="15.9" height="15.7" fill="rgb(254,172,227)"/>
<rect x="982.8" y="1317.0" width="15.9" height="15.7" fill="rgb(254,167,221)"/>
<rect x="997.6" y="1317.0" width="15.9" height="15.7" fill="rgb(254,161,216)"/>
<rect x="1012.5" y="1317.0" width="15.9" height="15.7" fill="rgb(254,157,211)"/>
<rect x="1027.4" y="1317.0" width="15.9" height="15.7" fill="rgb(254,152,206)"/>
<rect x="1042.2" y="1317.0" width="15.9" height="15.7" fill="rgb(254,147,201)"/>
<rect x="1057.1" y="1317.0" width="15.9" height="15.7" fill="rgb(254,142,196)"/>
<rect x="1072.0" y="1317.0" width="15.9" height="15.7" fill="rgb(254,138,192)"/>
<rect x="1086.9" y="1317.0" width="15.9" height="15.7" fill="rgb(254,133,187)"/>
<rect x="685.2" y="1331.7" width="15.9" height="15.7" fill="rgb(165,197,254)"/>
<rect x="700.1" y="1331.7" width="15.9" height="15.7" fill="rgb(171,197,254)"/>
<rect x="715.0" y="1331.7" width="15.9" height="15.7" fill="rgb(178,197,254)"/>
<rect x="729.9" y="1331.7" width="15.9" height="15.7" fill="rgb(184,196,254)"/>
<rect x="744.8" y="1331.7" width="15.9" height="15.7" fill="rgb(191,196,254)"/>
<rect x="759.6" y="1331.7" width="15.9" height="15.7" fill="rgb(197,195,254)"/>
<rect x="774.5" y="1331.7" width="15.9" height="15.7" fill="rgb(204,195,254)"/>
<rect x="789.4" y="1331.7" width="15.9" height="15.7" fill="rgb(210,195,254)"/>
<rect x="804.2" y="1331.7" width="15.9" height="15.7" fill="rgb(216,194,254)"/>
<rect x="819.1" y="1331.7" width="15.9" height="15.7" fill="rgb(222,194,254)"/>
<rect x="834.0" y="1331.7" width="15.9" height="15.7" fill="rgb(229,194,254)"/>
<rect x="848.9" y="1331.7" width="15.9" height="15.7" fill="rgb(235,193,254)"/>
<rect x="863.8" y="1331.7" width="15.9" height="15.7" fill="rgb(241,193,254)"/>
<rect x="878.6" y="1331.7" width="15.9" height="15.7" fill="rgb(247,192,254)"/>
<rect x="893.5" y="1331.7" width="15.9" height="15.7" fill="rgb(253,192,254)"/>
<rect x="908.4" y="1331.7" width="15.9" height="15.7" fill="rgb(254,187,250)"/>
<rect x="923.2" y="1331.7" width="15.9" height="15.7" fill="rgb(254,182,244)"/>
<rect x="938.1" y="1331.7" width="15.9" height="15.7" fill="rgb(254,176,238)"/>
<rect x="953.0" y="1331.7" width="15.9" height="15.7" fill="rgb(254,171,233)"/>
<rect x="967.9" y="1331.7" width="15.9" height="15.7" fill="rgb(254,166,227)"/>
<rect x="982.8" y="1331.7" width="15.9" height="15.7" fill="rgb(254,161,222)"/>
<rect x="997.6" y="1331.7" width="15.9" height="15.7" fill="rgb(254,156,217)"/>
<rect x="1012.5" y="1331.7" width="15.9" height="15.7" fill="rgb(254,151,212)"/>
<rect x="1027.4" y="1331.7" width="15.9" height="15.7" fill="rgb(254,146,207)"/>
<rect x="1042.2" y="1331.7" width="15.9" height="15.7" fill="rgb(254,142,202)"/>
<rect x="1057.1" y="1331.7" width="15.9" height="15.7" fill="rgb(254,137,197)"/>
<rect x="1072.0" y="1331.7" width="15.9" height="15.7" fill="rgb(254,133,192)"/>
<rect x="1086.9" y="1331.7" width="15.9" height="15.7" fill="rgb(254,128,188)"/>
</g>
<path d="M759.3,1318 C759.8,1317.6 749.9,1324.5 762.1,1315.7 C774.4,1306.9 809.2,1281.5 832.8,1264.9 C856.4,1248.3 879.0,1232.0 903.5,1216.3 C928.0,1200.6 952.0,1186.8 980.0,1170.7 C1008.0,1154.6 1055.6,1128.6 1071.3,1119.9 C1087.0,1111.2 1073.5,1118.7 1074.0,1118.5" fill="none" stroke="#000" stroke-width="3.3"/>
<rect x="884" y="1188" width="19" height="19" fill="#fff" stroke="#000" stroke-width="2"/>
<circle cx="889.6" cy="1179.8" r="5.8" fill="rgb(28,28,28)" stroke="#000" stroke-width="1.4"/>
<circle cx="888.1" cy="1179.3" r="5.8" fill="rgb(51,51,51)" stroke="#000" stroke-width="1.4"/>
<circle cx="883.9" cy="1184.4" r="5.8" fill="rgb(77,77,77)" stroke="#000" stroke-width="1.4"/>
<circle cx="882.4" cy="1188.1" r="5.8" fill="rgb(102,102,102)" stroke="#000" stroke-width="1.4"/>
<circle cx="879.6" cy="1190.5" r="5.8" fill="rgb(128,128,128)" stroke="#000" stroke-width="1.4"/>
<circle cx="878.9" cy="1190.9" r="5.8" fill="rgb(153,153,153)" stroke="#000" stroke-width="1.4"/>
<circle cx="878.9" cy="1192.8" r="5.8" fill="rgb(179,179,179)" stroke="#000" stroke-width="1.4"/>
<circle cx="878.2" cy="1191.4" r="5.8" fill="rgb(204,204,204)" stroke="#000" stroke-width="1.4"/>
<circle cx="881.0" cy="1187.2" r="5.8" fill="rgb(230,230,230)" stroke="#000" stroke-width="1.4"/>
<circle cx="866.8" cy="1203.0" r="5.8" fill="rgb(255,255,255)" stroke="#000" stroke-width="1.4"/>
</g>
<rect x="715" y="1082" width="357" height="235" fill="none" stroke="#8f8f8f" stroke-width="2"/>
<line x1="732.0" y1="1317" x2="732.0" y2="1325" stroke="#ddd" stroke-width="2"/>
<line x1="803.3" y1="1317" x2="803.3" y2="1325" stroke="#ddd" stroke-width="2"/>
<line x1="874.6" y1="1317" x2="874.6" y2="1325" stroke="#ddd" stroke-width="2"/>
<line x1="945.9" y1="1317" x2="945.9" y2="1325" stroke="#ddd" stroke-width="2"/>
<line x1="1017.2" y1="1317" x2="1017.2" y2="1325" stroke="#ddd" stroke-width="2"/>
<line x1="706" y1="1150.3" x2="714" y2="1150.3" stroke="#ddd" stroke-width="2"/>
<line x1="706" y1="1243.1" x2="714" y2="1243.1" stroke="#ddd" stroke-width="2"/>
<text x="24.0" y="16.0" font-size="12" font-weight="normal" fill="#06140c" textLength="459.3" lengthAdjust="spacingAndGlyphs">Calman 2025 Calman Ultimate for Business 286 Days Remaining  - Analysis/SDR Toolkit</text>
<text x="50.0" y="44.2" font-size="25" font-weight="bold" fill="#fff" textLength="85.2" lengthAdjust="spacingAndGlyphs">calman</text>
<text x="9.0" y="101.0" font-size="12.5" font-weight="normal" fill="#e0e0e0" textLength="63.1" lengthAdjust="spacingAndGlyphs">SDR Toolkit</text>
<text x="30.0" y="123.6" font-size="11" font-weight="bold" fill="#fff" textLength="47.1" lengthAdjust="spacingAndGlyphs">Welcome</text>
<text x="43.0" y="139.7" font-size="11" font-weight="normal" fill="#fff" textLength="45.6" lengthAdjust="spacingAndGlyphs">Welcome</text>
<text x="43.0" y="153.8" font-size="11" font-weight="normal" fill="#fff" textLength="38.9" lengthAdjust="spacingAndGlyphs">Options</text>
<text x="30.0" y="168.5" font-size="11" font-weight="bold" fill="#fff" textLength="41.3" lengthAdjust="spacingAndGlyphs">Analysis</text>
<text x="43.0" y="184.6" font-size="11" font-weight="normal" fill="#fff" textLength="75.3" lengthAdjust="spacingAndGlyphs">Dynamic Range</text>
<text x="43.0" y="198.6" font-size="11" font-weight="normal" fill="#fff" textLength="71.6" lengthAdjust="spacingAndGlyphs">Grayscale - 2pt</text>
<text x="43.0" y="213.3" font-size="11" font-weight="normal" fill="#333" textLength="81.5" lengthAdjust="spacingAndGlyphs">Grayscale - Multi</text>
<text x="43.0" y="228.7" font-size="11" font-weight="normal" fill="#fff" textLength="62.4" lengthAdjust="spacingAndGlyphs">Color Gamut</text>
<text x="43.0" y="242.8" font-size="11" font-weight="normal" fill="#fff" textLength="34.9" lengthAdjust="spacingAndGlyphs">3D LUT</text>
<text x="43.0" y="257.4" font-size="11" font-weight="normal" fill="#fff" textLength="64.3" lengthAdjust="spacingAndGlyphs">ColorChecker</text>
<text x="43.0" y="272.6" font-size="11" font-weight="normal" fill="#fff" textLength="89.4" lengthAdjust="spacingAndGlyphs">Saturation Sweeps</text>
<text x="43.0" y="286.9" font-size="11" font-weight="normal" fill="#fff" textLength="91.1" lengthAdjust="spacingAndGlyphs">Luminance Sweeps</text>
<text x="43.0" y="301.6" font-size="11" font-weight="normal" fill="#fff" textLength="45.0" lengthAdjust="spacingAndGlyphs">Additivity</text>
<text x="43.0" y="316.8" font-size="11" font-weight="normal" fill="#fff" textLength="87.4" lengthAdjust="spacingAndGlyphs">Screen Uniformity</text>
<text x="43.0" y="330.7" font-size="11" font-weight="normal" fill="#fff" textLength="85.3" lengthAdjust="spacingAndGlyphs">Screen Angularity</text>
<text x="43.0" y="345.4" font-size="11" font-weight="normal" fill="#fff" textLength="74.5" lengthAdjust="spacingAndGlyphs">Screen Stability</text>
<text x="43.0" y="360.5" font-size="11" font-weight="normal" fill="#fff" textLength="96.7" lengthAdjust="spacingAndGlyphs">Spectral Power Dist.</text>
<text x="206.0" y="78.0" font-size="12" font-weight="normal" fill="#dcdcdc" textLength="45.4" lengthAdjust="spacingAndGlyphs">History 1</text>
<text x="2077.0" y="69.5" font-size="11" font-weight="normal" fill="#eee" textLength="64.5" lengthAdjust="spacingAndGlyphs">X-Rite i1Pro 2</text>
<text x="2077.0" y="83.5" font-size="11" font-weight="normal" fill="#eee" textLength="55.4" lengthAdjust="spacingAndGlyphs">Direct View</text>
<text x="2188.0" y="76.5" font-size="10" font-weight="normal" fill="#fff" textLength="14.7" lengthAdjust="spacingAndGlyphs">238</text>
<text x="2224.0" y="69.5" font-size="11" font-weight="normal" fill="#eee" textLength="32.9" lengthAdjust="spacingAndGlyphs">Source</text>
<text x="2362.0" y="69.5" font-size="11" font-weight="normal" fill="#eee" textLength="106.4" lengthAdjust="spacingAndGlyphs">Direct Display Control</text>
<text x="210.0" y="282.5" font-size="60" font-weight="normal" fill="#ececec" textLength="430.1" lengthAdjust="spacingAndGlyphs">Grayscale - Multi</text>
<text x="357.0" y="347.5" font-size="29" font-weight="normal" fill="#ececec" textLength="150.9" lengthAdjust="spacingAndGlyphs">dE Formula:</text>
<text x="527.0" y="348.0" font-size="22" font-weight="normal" fill="#eee" textLength="47.9" lengthAdjust="spacingAndGlyphs">2000</text>
<text x="228.2" y="423.5" font-size="21" font-weight="normal" fill="#d4d4d4" textLength="34.3" lengthAdjust="spacingAndGlyphs">100</text>
<text x="240.0" y="453.0" font-size="21" font-weight="normal" fill="#d4d4d4" textLength="22.9" lengthAdjust="spacingAndGlyphs">90</text>
<text x="240.0" y="482.4" font-size="21" font-weight="normal" fill="#d4d4d4" textLength="22.9" lengthAdjust="spacingAndGlyphs">80</text>
<text x="240.0" y="511.9" font-size="21" font-weight="normal" fill="#d4d4d4" textLength="22.9" lengthAdjust="spacingAndGlyphs">70</text>
<text x="240.0" y="541.3" font-size="21" font-weight="normal" fill="#d4d4d4" textLength="22.9" lengthAdjust="spacingAndGlyphs">60</text>
<text x="240.0" y="570.8" font-size="21" font-weight="normal" fill="#d4d4d4" textLength="22.9" lengthAdjust="spacingAndGlyphs">50</text>
<text x="240.0" y="600.2" font-size="21" font-weight="normal" fill="#d4d4d4" textLength="22.9" lengthAdjust="spacingAndGlyphs">40</text>
<text x="240.0" y="629.7" font-size="21" font-weight="normal" fill="#d4d4d4" textLength="22.9" lengthAdjust="spacingAndGlyphs">30</text>
<text x="240.0" y="659.1" font-size="21" font-weight="normal" fill="#d4d4d4" textLength="22.9" lengthAdjust="spacingAndGlyphs">20</text>
<text x="240.0" y="688.6" font-size="21" font-weight="normal" fill="#d4d4d4" textLength="22.9" lengthAdjust="spacingAndGlyphs">10</text>
<text x="250.7" y="718.0" font-size="21" font-weight="normal" fill="#d4d4d4" textLength="11.4" lengthAdjust="spacingAndGlyphs">0</text>
<text x="265.6" y="756.0" font-size="21" font-weight="normal" fill="#d4d4d4" textLength="11.4" lengthAdjust="spacingAndGlyphs">0</text>
<text x="322.9" y="756.0" font-size="21" font-weight="normal" fill="#d4d4d4" textLength="11.4" lengthAdjust="spacingAndGlyphs">2</text>
<text x="380.1" y="756.0" font-size="21" font-weight="normal" fill="#d4d4d4" textLength="11.4" lengthAdjust="spacingAndGlyphs">4</text>
<text x="437.3" y="756.0" font-size="21" font-weight="normal" fill="#d4d4d4" textLength="11.4" lengthAdjust="spacingAndGlyphs">6</text>
<text x="494.6" y="756.0" font-size="21" font-weight="normal" fill="#d4d4d4" textLength="11.4" lengthAdjust="spacingAndGlyphs">8</text>
<text x="546.4" y="756.0" font-size="21" font-weight="normal" fill="#d4d4d4" textLength="22.9" lengthAdjust="spacingAndGlyphs">10</text>
<text x="603.7" y="756.0" font-size="21" font-weight="normal" fill="#d4d4d4" textLength="22.9" lengthAdjust="spacingAndGlyphs">12</text>
<text x="660.4" y="756.0" font-size="21" font-weight="normal" fill="#d4d4d4" textLength="22.9" lengthAdjust="spacingAndGlyphs">14</text>
<text x="410.5" y="394.2" font-size="21" font-weight="normal" fill="#d0d0d0" textLength="110.6" lengthAdjust="spacingAndGlyphs">DeltaE 2000</text>
<text x="323.0" y="815.2" font-size="43" font-weight="normal" fill="#ececec" textLength="305.3" lengthAdjust="spacingAndGlyphs">Avg dE2000: 1.8</text>
<text x="769.5" y="690.1" font-size="21" font-weight="normal" fill="#d4d4d4" textLength="22.9" lengthAdjust="spacingAndGlyphs">96</text>
<text x="769.5" y="600.1" font-size="21" font-weight="normal" fill="#d4d4d4" textLength="22.9" lengthAdjust="spacingAndGlyphs">98</text>
<text x="757.7" y="510.0" font-size="21" font-weight="normal" fill="#d4d4d4" textLength="34.3" lengthAdjust="spacingAndGlyphs">100</text>
<text x="757.7" y="419.9" font-size="21" font-weight="normal" fill="#d4d4d4" textLength="34.3" lengthAdjust="spacingAndGlyphs">102</text>
<text x="757.7" y="329.9" font-size="21" font-weight="normal" fill="#d4d4d4" textLength="34.3" lengthAdjust="spacingAndGlyphs">104</text>
<text x="795.1" y="755.6" font-size="21" font-weight="normal" fill="#d4d4d4" textLength="11.4" lengthAdjust="spacingAndGlyphs">0</text>
<text x="870.3" y="755.6" font-size="21" font-weight="normal" fill="#d4d4d4" textLength="22.9" lengthAdjust="spacingAndGlyphs">10</text>
<text x="950.9" y="755.6" font-size="21" font-weight="normal" fill="#d4d4d4" textLength="22.9" lengthAdjust="spacingAndGlyphs">20</text>
<text x="1031.5" y="755.6" font-size="21" font-weight="normal" fill="#d4d4d4" textLength="22.9" lengthAdjust="spacingAndGlyphs">30</text>
<text x="1112.1" y="755.6" font-size="21" font-weight="normal" fill="#d4d4d4" textLength="22.9" lengthAdjust="spacingAndGlyphs">40</text>
<text x="1192.7" y="755.6" font-size="21" font-weight="normal" fill="#d4d4d4" textLength="22.9" lengthAdjust="spacingAndGlyphs">50</text>
<text x="1273.3" y="755.6" font-size="21" font-weight="normal" fill="#d4d4d4" textLength="22.9" lengthAdjust="spacingAndGlyphs">60</text>
<text x="1353.9" y="755.6" font-size="21" font-weight="normal" fill="#d4d4d4" textLength="22.9" lengthAdjust="spacingAndGlyphs">70</text>
<text x="1434.5" y="755.6" font-size="21" font-weight="normal" fill="#d4d4d4" textLength="22.9" lengthAdjust="spacingAndGlyphs">80</text>
<text x="1515.1" y="755.6" font-size="21" font-weight="normal" fill="#d4d4d4" textLength="22.9" lengthAdjust="spacingAndGlyphs">90</text>
<text x="1589.8" y="755.6" font-size="21" font-weight="normal" fill="#d4d4d4" textLength="34.3" lengthAdjust="spacingAndGlyphs">100</text>
<text x="1124.0" y="268.5" font-size="21" font-weight="normal" fill="#d0d0d0" textLength="117.2" lengthAdjust="spacingAndGlyphs">RGB Balance</text>
<text x="904.0" y="815.0" font-size="43" font-weight="normal" fill="#ececec" textLength="268.9" lengthAdjust="spacingAndGlyphs">Avg CCT: 6589</text>
<text x="1664.5" y="697.8" font-size="21" font-weight="normal" fill="#d4d4d4" textLength="22.9" lengthAdjust="spacingAndGlyphs">96</text>
<text x="1664.5" y="606.3" font-size="21" font-weight="normal" fill="#d4d4d4" textLength="22.9" lengthAdjust="spacingAndGlyphs">98</text>
<text x="1652.7" y="514.8" font-size="21" font-weight="normal" fill="#d4d4d4" textLength="34.3" lengthAdjust="spacingAndGlyphs">100</text>
<text x="1652.7" y="423.3" font-size="21" font-weight="normal" fill="#d4d4d4" textLength="34.3" lengthAdjust="spacingAndGlyphs">102</text>
<text x="1652.7" y="331.8" font-size="21" font-weight="normal" fill="#d4d4d4" textLength="34.3" lengthAdjust="spacingAndGlyphs">104</text>
<text x="1768.8" y="756.0" font-size="21" font-weight="normal" fill="#d4d4d4" textLength="34.3" lengthAdjust="spacingAndGlyphs">100</text>
<text x="1706.2" y="268.0" font-size="21" font-weight="normal" fill="#d0d0d0" textLength="117.2" lengthAdjust="spacingAndGlyphs">RGB Balance</text>
<text x="1435.0" y="815.0" font-size="43" font-weight="normal" fill="#ececec" textLength="388.5" lengthAdjust="spacingAndGlyphs">Contrast Ratio: 1027</text>
<text x="1921.6" y="733.6" font-size="21" font-weight="normal" fill="#d4d4d4" textLength="28.6" lengthAdjust="spacingAndGlyphs">1.8</text>
<text x="1938.2" y="645.8" font-size="21" font-weight="normal" fill="#d4d4d4" textLength="11.4" lengthAdjust="spacingAndGlyphs">2</text>
<text x="1921.6" y="555.0" font-size="21" font-weight="normal" fill="#d4d4d4" textLength="28.6" lengthAdjust="spacingAndGlyphs">2.2</text>
<text x="1920.6" y="464.8" font-size="21" font-weight="normal" fill="#d4d4d4" textLength="28.6" lengthAdjust="spacingAndGlyphs">2.4</text>
<text x="1921.6" y="376.0" font-size="21" font-weight="normal" fill="#d4d4d4" textLength="28.6" lengthAdjust="spacingAndGlyphs">2.6</text>
<text x="1921.6" y="284.5" font-size="21" font-weight="normal" fill="#d4d4d4" textLength="28.6" lengthAdjust="spacingAndGlyphs">2.8</text>
<text x="1954.1" y="755.6" font-size="21" font-weight="normal" fill="#d4d4d4" textLength="11.4" lengthAdjust="spacingAndGlyphs">0</text>
<text x="2060.8" y="755.6" font-size="21" font-weight="normal" fill="#d4d4d4" textLength="22.9" lengthAdjust="spacingAndGlyphs">20</text>
<text x="2173.0" y="755.6" font-size="21" font-weight="normal" fill="#d4d4d4" textLength="22.9" lengthAdjust="spacingAndGlyphs">40</text>
<text x="2285.1" y="755.6" font-size="21" font-weight="normal" fill="#d4d4d4" textLength="22.9" lengthAdjust="spacingAndGlyphs">60</text>
<text x="2397.2" y="755.6" font-size="21" font-weight="normal" fill="#d4d4d4" textLength="22.9" lengthAdjust="spacingAndGlyphs">80</text>
<text x="2503.4" y="755.6" font-size="21" font-weight="normal" fill="#d4d4d4" textLength="34.3" lengthAdjust="spacingAndGlyphs">100</text>
<text x="2145.5" y="268.0" font-size="21" font-weight="normal" fill="#d0d0d0" textLength="153.4" lengthAdjust="spacingAndGlyphs">Gamma Log/Log</text>
<text x="1999.0" y="815.0" font-size="43" font-weight="normal" fill="#ececec" textLength="444.8" lengthAdjust="spacingAndGlyphs">Average Gamma: 2.153</text>
<text x="447.2" y="1017.0" font-size="19" font-weight="normal" fill="#f0f0f0" textLength="9.3" lengthAdjust="spacingAndGlyphs">0</text>
<text x="641.5" y="1017.0" font-size="19" font-weight="normal" fill="#f0f0f0" textLength="18.6" lengthAdjust="spacingAndGlyphs">10</text>
<text x="840.2" y="1017.0" font-size="19" font-weight="normal" fill="#f0f0f0" textLength="18.6" lengthAdjust="spacingAndGlyphs">20</text>
<text x="1038.9" y="1017.0" font-size="19" font-weight="normal" fill="#f0f0f0" textLength="18.6" lengthAdjust="spacingAndGlyphs">30</text>
<text x="1237.6" y="1017.0" font-size="19" font-weight="normal" fill="#f0f0f0" textLength="18.6" lengthAdjust="spacingAndGlyphs">40</text>
<text x="1436.3" y="1017.0" font-size="19" font-weight="normal" fill="#f0f0f0" textLength="18.6" lengthAdjust="spacingAndGlyphs">50</text>
<text x="1635.0" y="1017.0" font-size="19" font-weight="normal" fill="#f0f0f0" textLength="18.6" lengthAdjust="spacingAndGlyphs">60</text>
<text x="1833.7" y="1017.0" font-size="19" font-weight="normal" fill="#f0f0f0" textLength="18.6" lengthAdjust="spacingAndGlyphs">70</text>
<text x="2032.4" y="1017.0" font-size="19" font-weight="normal" fill="#f0f0f0" textLength="18.6" lengthAdjust="spacingAndGlyphs">80</text>
<text x="2231.1" y="1017.0" font-size="19" font-weight="normal" fill="#f0f0f0" textLength="18.6" lengthAdjust="spacingAndGlyphs">90</text>
<text x="2424.9" y="1017.0" font-size="19" font-weight="normal" fill="#f0f0f0" textLength="27.9" lengthAdjust="spacingAndGlyphs">100</text>
<text x="229.5" y="1122.3" font-size="41" font-weight="normal" fill="#ececec" textLength="311.8" lengthAdjust="spacingAndGlyphs">Current Reading</text>
<text x="231.0" y="1182.6" font-size="35" font-weight="normal" fill="#ececec" textLength="144.0" lengthAdjust="spacingAndGlyphs">x: 0.3089</text>
<text x="442.0" y="1182.6" font-size="35" font-weight="normal" fill="#ececec" textLength="125.5" lengthAdjust="spacingAndGlyphs">y: 0.328</text>
<text x="231.0" y="1229.8" font-size="35" font-weight="normal" fill="#ececec" textLength="156.6" lengthAdjust="spacingAndGlyphs">u': 0.1956</text>
<text x="442.0" y="1229.8" font-size="35" font-weight="normal" fill="#ececec" textLength="152.7" lengthAdjust="spacingAndGlyphs">v': 0.4672</text>
<text x="231.0" y="1279.0" font-size="35" font-weight="normal" fill="#ececec" textLength="263.9" lengthAdjust="spacingAndGlyphs">cd/m²: 426.2537</text>
<text x="231.0" y="1327.0" font-size="35" font-weight="normal" fill="#ececec" textLength="216.9" lengthAdjust="spacingAndGlyphs">ΔE 2000: 2.35</text>
<text x="711.9" y="1347.0" font-size="21" font-weight="normal" fill="#d4d4d4" textLength="40.0" lengthAdjust="spacingAndGlyphs">0.29</text>
<text x="789.1" y="1347.0" font-size="21" font-weight="normal" fill="#d4d4d4" textLength="28.6" lengthAdjust="spacingAndGlyphs">0.3</text>
<text x="854.5" y="1347.0" font-size="21" font-weight="normal" fill="#d4d4d4" textLength="40.0" lengthAdjust="spacingAndGlyphs">0.31</text>
<text x="925.8" y="1347.0" font-size="21" font-weight="normal" fill="#d4d4d4" textLength="40.0" lengthAdjust="spacingAndGlyphs">0.32</text>
<text x="997.1" y="1347.0" font-size="21" font-weight="normal" fill="#d4d4d4" textLength="40.0" lengthAdjust="spacingAndGlyphs">0.33</text>
<text x="664.8" y="1158.3" font-size="21" font-weight="normal" fill="#d4d4d4" textLength="40.0" lengthAdjust="spacingAndGlyphs">0.34</text>
<text x="664.8" y="1251.1" font-size="21" font-weight="normal" fill="#d4d4d4" textLength="40.0" lengthAdjust="spacingAndGlyphs">0.32</text>
<text x="817.0" y="1075.0" font-size="21" font-weight="normal" fill="#d0d0d0" textLength="105.4" lengthAdjust="spacingAndGlyphs">CIE 1931 xy</text>
<text x="1301.3" y="1066.0" font-size="20" font-weight="normal" fill="#eeeeee" textLength="9.5" lengthAdjust="spacingAndGlyphs">0</text>
<text x="1389.7" y="1066.0" font-size="20" font-weight="normal" fill="#eeeeee" textLength="18.9" lengthAdjust="spacingAndGlyphs">10</text>
<text x="1482.7" y="1066.0" font-size="20" font-weight="normal" fill="#eeeeee" textLength="18.9" lengthAdjust="spacingAndGlyphs">20</text>
<text x="1575.7" y="1066.0" font-size="20" font-weight="normal" fill="#eeeeee" textLength="18.9" lengthAdjust="spacingAndGlyphs">30</text>
<text x="1668.7" y="1066.0" font-size="20" font-weight="normal" fill="#eeeeee" textLength="18.9" lengthAdjust="spacingAndGlyphs">40</text>
<text x="1761.7" y="1066.0" font-size="20" font-weight="normal" fill="#eeeeee" textLength="18.9" lengthAdjust="spacingAndGlyphs">50</text>
<text x="1854.7" y="1066.0" font-size="20" font-weight="normal" fill="#eeeeee" textLength="18.9" lengthAdjust="spacingAndGlyphs">60</text>
<text x="1947.7" y="1066.0" font-size="20" font-weight="normal" fill="#eeeeee" textLength="18.9" lengthAdjust="spacingAndGlyphs">70</text>
<text x="2040.7" y="1066.0" font-size="20" font-weight="normal" fill="#eeeeee" textLength="18.9" lengthAdjust="spacingAndGlyphs">80</text>
<text x="2133.7" y="1066.0" font-size="20" font-weight="normal" fill="#eeeeee" textLength="18.9" lengthAdjust="spacingAndGlyphs">90</text>
<text x="2222.0" y="1066.0" font-size="20" font-weight="normal" fill="#eeeeee" textLength="28.4" lengthAdjust="spacingAndGlyphs">100</text>
<text x="1102.0" y="1101.0" font-size="20.5" font-weight="bold" fill="#f2f2f2" textLength="66.4" lengthAdjust="spacingAndGlyphs">x: CIE31</text>
<text x="1265.0" y="1101.0" font-size="20.5" font-weight="normal" fill="#ececec" textLength="52.3" lengthAdjust="spacingAndGlyphs">0.2808</text>
<text x="1358.0" y="1101.0" font-size="20.5" font-weight="normal" fill="#ececec" textLength="52.3" lengthAdjust="spacingAndGlyphs">0.3121</text>
<text x="1451.0" y="1101.0" font-size="20.5" font-weight="normal" fill="#ececec" textLength="51.1" lengthAdjust="spacingAndGlyphs">0.3119</text>
<text x="1544.0" y="1101.0" font-size="20.5" font-weight="normal" fill="#ececec" textLength="51.1" lengthAdjust="spacingAndGlyphs">0.3113</text>
<text x="1637.0" y="1101.0" font-size="20.5" font-weight="normal" fill="#ececec" textLength="49.8" lengthAdjust="spacingAndGlyphs">0.3111</text>
<text x="1730.0" y="1101.0" font-size="20.5" font-weight="normal" fill="#ececec" textLength="52.3" lengthAdjust="spacingAndGlyphs">0.3107</text>
<text x="1823.0" y="1101.0" font-size="20.5" font-weight="normal" fill="#ececec" textLength="52.3" lengthAdjust="spacingAndGlyphs">0.3106</text>
<text x="1916.0" y="1101.0" font-size="20.5" font-weight="normal" fill="#ececec" textLength="52.3" lengthAdjust="spacingAndGlyphs">0.3106</text>
<text x="2009.0" y="1101.0" font-size="20.5" font-weight="normal" fill="#ececec" textLength="52.3" lengthAdjust="spacingAndGlyphs">0.3105</text>
<text x="2102.0" y="1101.0" font-size="20.5" font-weight="normal" fill="#ececec" textLength="52.3" lengthAdjust="spacingAndGlyphs">0.3109</text>
<text x="2195.0" y="1101.0" font-size="20.5" font-weight="normal" fill="#ececec" textLength="52.3" lengthAdjust="spacingAndGlyphs">0.3089</text>
<text x="1102.0" y="1133.8" font-size="20.5" font-weight="bold" fill="#f2f2f2" textLength="66.4" lengthAdjust="spacingAndGlyphs">y: CIE31</text>
<text x="1265.0" y="1133.8" font-size="20.5" font-weight="normal" fill="#ececec" textLength="52.3" lengthAdjust="spacingAndGlyphs">0.2866</text>
<text x="1358.0" y="1133.8" font-size="20.5" font-weight="normal" fill="#ececec" textLength="52.3" lengthAdjust="spacingAndGlyphs">0.3330</text>
<text x="1451.0" y="1133.8" font-size="20.5" font-weight="normal" fill="#ececec" textLength="52.3" lengthAdjust="spacingAndGlyphs">0.3331</text>
<text x="1544.0" y="1133.8" font-size="20.5" font-weight="normal" fill="#ececec" textLength="52.3" lengthAdjust="spacingAndGlyphs">0.3320</text>
<text x="1637.0" y="1133.8" font-size="20.5" font-weight="normal" fill="#ececec" textLength="52.3" lengthAdjust="spacingAndGlyphs">0.3312</text>
<text x="1730.0" y="1133.8" font-size="20.5" font-weight="normal" fill="#ececec" textLength="52.3" lengthAdjust="spacingAndGlyphs">0.3307</text>
<text x="1823.0" y="1133.8" font-size="20.5" font-weight="normal" fill="#ececec" textLength="52.3" lengthAdjust="spacingAndGlyphs">0.3306</text>
<text x="1916.0" y="1133.8" font-size="20.5" font-weight="normal" fill="#ececec" textLength="52.3" lengthAdjust="spacingAndGlyphs">0.3302</text>
<text x="2009.0" y="1133.8" font-size="20.5" font-weight="normal" fill="#ececec" textLength="52.3" lengthAdjust="spacingAndGlyphs">0.3305</text>
<text x="2102.0" y="1133.8" font-size="20.5" font-weight="normal" fill="#ececec" textLength="52.3" lengthAdjust="spacingAndGlyphs">0.3314</text>
<text x="2195.0" y="1133.8" font-size="20.5" font-weight="normal" fill="#ececec" textLength="52.3" lengthAdjust="spacingAndGlyphs">0.3280</text>
<text x="1102.0" y="1166.7" font-size="20.5" font-weight="bold" fill="#f2f2f2" textLength="11.2" lengthAdjust="spacingAndGlyphs">Y</text>
<text x="1265.0" y="1166.7" font-size="20.5" font-weight="normal" fill="#ececec" textLength="52.3" lengthAdjust="spacingAndGlyphs">0.4152</text>
<text x="1358.0" y="1166.7" font-size="20.5" font-weight="normal" fill="#ececec" textLength="52.3" lengthAdjust="spacingAndGlyphs">4.9790</text>
<text x="1451.0" y="1166.7" font-size="20.5" font-weight="normal" fill="#ececec" textLength="61.8" lengthAdjust="spacingAndGlyphs">14.6238</text>
<text x="1544.0" y="1166.7" font-size="20.5" font-weight="normal" fill="#ececec" textLength="61.8" lengthAdjust="spacingAndGlyphs">31.2319</text>
<text x="1637.0" y="1166.7" font-size="20.5" font-weight="normal" fill="#ececec" textLength="61.8" lengthAdjust="spacingAndGlyphs">56.9323</text>
<text x="1730.0" y="1166.7" font-size="20.5" font-weight="normal" fill="#ececec" textLength="61.8" lengthAdjust="spacingAndGlyphs">93.3249</text>
<text x="1823.0" y="1166.7" font-size="20.5" font-weight="normal" fill="#ececec" textLength="71.3" lengthAdjust="spacingAndGlyphs">137.2443</text>
<text x="1916.0" y="1166.7" font-size="20.5" font-weight="normal" fill="#ececec" textLength="71.3" lengthAdjust="spacingAndGlyphs">191.3656</text>
<text x="2009.0" y="1166.7" font-size="20.5" font-weight="normal" fill="#ececec" textLength="71.3" lengthAdjust="spacingAndGlyphs">260.5525</text>
<text x="2102.0" y="1166.7" font-size="20.5" font-weight="normal" fill="#ececec" textLength="71.3" lengthAdjust="spacingAndGlyphs">342.4849</text>
<text x="2195.0" y="1166.7" font-size="20.5" font-weight="normal" fill="#ececec" textLength="71.3" lengthAdjust="spacingAndGlyphs">426.2537</text>
<text x="1102.0" y="1199.5" font-size="20.5" font-weight="bold" fill="#f2f2f2" textLength="65.7" lengthAdjust="spacingAndGlyphs">Target Y</text>
<text x="1265.0" y="1199.5" font-size="20.5" font-weight="normal" fill="#ececec" textLength="52.3" lengthAdjust="spacingAndGlyphs">0.0000</text>
<text x="1358.0" y="1199.5" font-size="20.5" font-weight="normal" fill="#ececec" textLength="52.3" lengthAdjust="spacingAndGlyphs">4.4031</text>
<text x="1451.0" y="1199.5" font-size="20.5" font-weight="normal" fill="#ececec" textLength="59.3" lengthAdjust="spacingAndGlyphs">14.1110</text>
<text x="1544.0" y="1199.5" font-size="20.5" font-weight="normal" fill="#ececec" textLength="61.8" lengthAdjust="spacingAndGlyphs">30.8061</text>
<text x="1637.0" y="1199.5" font-size="20.5" font-weight="normal" fill="#ececec" textLength="61.8" lengthAdjust="spacingAndGlyphs">56.6356</text>
<text x="1730.0" y="1199.5" font-size="20.5" font-weight="normal" fill="#ececec" textLength="60.6" lengthAdjust="spacingAndGlyphs">92.0113</text>
<text x="1823.0" y="1199.5" font-size="20.5" font-weight="normal" fill="#ececec" textLength="71.3" lengthAdjust="spacingAndGlyphs">135.7817</text>
<text x="1916.0" y="1199.5" font-size="20.5" font-weight="normal" fill="#ececec" textLength="71.3" lengthAdjust="spacingAndGlyphs">189.7686</text>
<text x="2009.0" y="1199.5" font-size="20.5" font-weight="normal" fill="#ececec" textLength="71.3" lengthAdjust="spacingAndGlyphs">257.3836</text>
<text x="2102.0" y="1199.5" font-size="20.5" font-weight="normal" fill="#ececec" textLength="71.3" lengthAdjust="spacingAndGlyphs">337.2937</text>
<text x="2195.0" y="1199.5" font-size="20.5" font-weight="normal" fill="#ececec" textLength="71.3" lengthAdjust="spacingAndGlyphs">426.2537</text>
<text x="1102.0" y="1232.4" font-size="20.5" font-weight="bold" fill="#f2f2f2" textLength="132.6" lengthAdjust="spacingAndGlyphs">Gamma Log/Log</text>
<text x="1265.0" y="1232.4" font-size="20.5" font-weight="normal" fill="#ececec" textLength="52.3" lengthAdjust="spacingAndGlyphs">1.2778</text>
<text x="1358.0" y="1232.4" font-size="20.5" font-weight="normal" fill="#ececec" textLength="52.3" lengthAdjust="spacingAndGlyphs">1.9490</text>
<text x="1451.0" y="1232.4" font-size="20.5" font-weight="normal" fill="#ececec" textLength="52.3" lengthAdjust="spacingAndGlyphs">2.0954</text>
<text x="1544.0" y="1232.4" font-size="20.5" font-weight="normal" fill="#ececec" textLength="52.3" lengthAdjust="spacingAndGlyphs">2.1590</text>
<text x="1637.0" y="1232.4" font-size="20.5" font-weight="normal" fill="#ececec" textLength="52.3" lengthAdjust="spacingAndGlyphs">2.1971</text>
<text x="1730.0" y="1232.4" font-size="20.5" font-weight="normal" fill="#111" textLength="52.3" lengthAdjust="spacingAndGlyphs">2.2038</text>
<text x="1823.0" y="1232.4" font-size="20.5" font-weight="normal" fill="#ececec" textLength="52.3" lengthAdjust="spacingAndGlyphs">2.2185</text>
<text x="1916.0" y="1232.4" font-size="20.5" font-weight="normal" fill="#ececec" textLength="52.3" lengthAdjust="spacingAndGlyphs">2.2278</text>
<text x="2009.0" y="1232.4" font-size="20.5" font-weight="normal" fill="#ececec" textLength="52.3" lengthAdjust="spacingAndGlyphs">2.2059</text>
<text x="2102.0" y="1232.4" font-size="20.5" font-weight="normal" fill="#ececec" textLength="52.3" lengthAdjust="spacingAndGlyphs">2.1205</text>
<text x="2195.0" y="1232.4" font-size="20.5" font-weight="normal" fill="#ececec" textLength="52.3" lengthAdjust="spacingAndGlyphs">2.2749</text>
<text x="1102.0" y="1265.2" font-size="20.5" font-weight="bold" fill="#f2f2f2" textLength="34.5" lengthAdjust="spacingAndGlyphs">CCT</text>
<text x="1265.0" y="1265.2" font-size="20.5" font-weight="normal" fill="#ececec" textLength="80.9" lengthAdjust="spacingAndGlyphs">9968.0000</text>
<text x="1358.0" y="1265.2" font-size="20.5" font-weight="normal" fill="#ececec" textLength="80.9" lengthAdjust="spacingAndGlyphs">6505.0000</text>
<text x="1451.0" y="1265.2" font-size="20.5" font-weight="normal" fill="#ececec" textLength="80.9" lengthAdjust="spacingAndGlyphs">6519.0000</text>
<text x="1544.0" y="1265.2" font-size="20.5" font-weight="normal" fill="#ececec" textLength="80.9" lengthAdjust="spacingAndGlyphs">6557.0000</text>
<text x="1637.0" y="1265.2" font-size="20.5" font-weight="normal" fill="#ececec" textLength="80.9" lengthAdjust="spacingAndGlyphs">6572.0000</text>
<text x="1730.0" y="1265.2" font-size="20.5" font-weight="normal" fill="#ececec" textLength="80.9" lengthAdjust="spacingAndGlyphs">6602.0000</text>
<text x="1823.0" y="1265.2" font-size="20.5" font-weight="normal" fill="#ececec" textLength="80.9" lengthAdjust="spacingAndGlyphs">6609.0000</text>
<text x="1916.0" y="1265.2" font-size="20.5" font-weight="normal" fill="#ececec" textLength="80.9" lengthAdjust="spacingAndGlyphs">6608.0000</text>
<text x="2009.0" y="1265.2" font-size="20.5" font-weight="normal" fill="#ececec" textLength="79.6" lengthAdjust="spacingAndGlyphs">6611.0000</text>
<text x="2102.0" y="1265.2" font-size="20.5" font-weight="normal" fill="#ececec" textLength="80.9" lengthAdjust="spacingAndGlyphs">6584.0000</text>
<text x="2195.0" y="1265.2" font-size="20.5" font-weight="normal" fill="#ececec" textLength="80.9" lengthAdjust="spacingAndGlyphs">6721.0000</text>
<text x="1102.0" y="1298.1" font-size="20.5" font-weight="bold" fill="#f2f2f2" textLength="65.4" lengthAdjust="spacingAndGlyphs">ΔE 2000</text>
<text x="1265.0" y="1298.1" font-size="20.5" font-weight="normal" fill="#ececec" textLength="52.3" lengthAdjust="spacingAndGlyphs">0.7869</text>
<text x="1358.0" y="1298.1" font-size="20.5" font-weight="normal" fill="#ececec" textLength="52.3" lengthAdjust="spacingAndGlyphs">1.0675</text>
<text x="1451.0" y="1298.1" font-size="20.5" font-weight="normal" fill="#ececec" textLength="52.3" lengthAdjust="spacingAndGlyphs">1.2982</text>
<text x="1544.0" y="1298.1" font-size="20.5" font-weight="normal" fill="#ececec" textLength="52.3" lengthAdjust="spacingAndGlyphs">1.4321</text>
<text x="1637.0" y="1298.1" font-size="20.5" font-weight="normal" fill="#ececec" textLength="52.3" lengthAdjust="spacingAndGlyphs">1.4504</text>
<text x="1730.0" y="1298.1" font-size="20.5" font-weight="normal" fill="#ececec" textLength="52.3" lengthAdjust="spacingAndGlyphs">1.7420</text>
<text x="1823.0" y="1298.1" font-size="20.5" font-weight="normal" fill="#ececec" textLength="52.3" lengthAdjust="spacingAndGlyphs">1.9144</text>
<text x="1916.0" y="1298.1" font-size="20.5" font-weight="normal" fill="#ececec" textLength="52.3" lengthAdjust="spacingAndGlyphs">1.9148</text>
<text x="2009.0" y="1298.1" font-size="20.5" font-weight="normal" fill="#ececec" textLength="52.3" lengthAdjust="spacingAndGlyphs">2.3479</text>
<text x="2102.0" y="1298.1" font-size="20.5" font-weight="normal" fill="#ececec" textLength="52.3" lengthAdjust="spacingAndGlyphs">2.9263</text>
<text x="2195.0" y="1298.1" font-size="20.5" font-weight="normal" fill="#ececec" textLength="52.3" lengthAdjust="spacingAndGlyphs">2.3536</text>
<text x="1102.0" y="1331.0" font-size="20.5" font-weight="bold" fill="#f2f2f2" textLength="54.1" lengthAdjust="spacingAndGlyphs">ΔE ITP</text>
<text x="1265.0" y="1331.0" font-size="20.5" font-weight="normal" fill="#ececec" textLength="61.8" lengthAdjust="spacingAndGlyphs">79.7150</text>
<text x="1358.0" y="1331.0" font-size="20.5" font-weight="normal" fill="#ececec" textLength="52.3" lengthAdjust="spacingAndGlyphs">6.2670</text>
<text x="1451.0" y="1331.0" font-size="20.5" font-weight="normal" fill="#ececec" textLength="52.3" lengthAdjust="spacingAndGlyphs">2.7001</text>
<text x="1544.0" y="1331.0" font-size="20.5" font-weight="normal" fill="#ececec" textLength="52.3" lengthAdjust="spacingAndGlyphs">1.9630</text>
<text x="1637.0" y="1331.0" font-size="20.5" font-weight="normal" fill="#ececec" textLength="52.3" lengthAdjust="spacingAndGlyphs">1.6782</text>
<text x="1730.0" y="1331.0" font-size="20.5" font-weight="normal" fill="#ececec" textLength="52.3" lengthAdjust="spacingAndGlyphs">2.0759</text>
<text x="1823.0" y="1331.0" font-size="20.5" font-weight="normal" fill="#ececec" textLength="52.3" lengthAdjust="spacingAndGlyphs">2.0238</text>
<text x="1916.0" y="1331.0" font-size="20.5" font-weight="normal" fill="#ececec" textLength="52.3" lengthAdjust="spacingAndGlyphs">1.8645</text>
<text x="2009.0" y="1331.0" font-size="20.5" font-weight="normal" fill="#ececec" textLength="52.3" lengthAdjust="spacingAndGlyphs">2.1430</text>
<text x="2102.0" y="1331.0" font-size="20.5" font-weight="normal" fill="#ececec" textLength="52.3" lengthAdjust="spacingAndGlyphs">2.3657</text>
<text x="2195.0" y="1331.0" font-size="20.5" font-weight="normal" fill="#ececec" textLength="52.3" lengthAdjust="spacingAndGlyphs">2.4184</text>
<text x="273.3" y="1546.0" font-size="11" font-weight="normal" fill="#2a2a2a" textLength="5.5" lengthAdjust="spacingAndGlyphs">0</text>
<text x="422.7" y="1546.0" font-size="11" font-weight="normal" fill="#2a2a2a" textLength="11.0" lengthAdjust="spacingAndGlyphs">10</text>
<text x="574.7" y="1546.0" font-size="11" font-weight="normal" fill="#2a2a2a" textLength="11.0" lengthAdjust="spacingAndGlyphs">20</text>
<text x="726.8" y="1546.0" font-size="11" font-weight="normal" fill="#2a2a2a" textLength="11.0" lengthAdjust="spacingAndGlyphs">30</text>
<text x="878.8" y="1546.0" font-size="11" font-weight="normal" fill="#2a2a2a" textLength="11.0" lengthAdjust="spacingAndGlyphs">40</text>
<text x="1030.8" y="1546.0" font-size="11" font-weight="normal" fill="#2a2a2a" textLength="11.0" lengthAdjust="spacingAndGlyphs">50</text>
<text x="1182.9" y="1546.0" font-size="11" font-weight="normal" fill="#2a2a2a" textLength="11.0" lengthAdjust="spacingAndGlyphs">60</text>
<text x="1335.0" y="1546.0" font-size="11" font-weight="normal" fill="#2a2a2a" textLength="11.0" lengthAdjust="spacingAndGlyphs">70</text>
<text x="1487.0" y="1546.0" font-size="11" font-weight="normal" fill="#2a2a2a" textLength="11.0" lengthAdjust="spacingAndGlyphs">80</text>
<text x="1639.0" y="1546.0" font-size="11" font-weight="normal" fill="#2a2a2a" textLength="11.0" lengthAdjust="spacingAndGlyphs">90</text>
<text x="1788.4" y="1546.0" font-size="11" font-weight="bold" fill="#fff" textLength="16.5" lengthAdjust="spacingAndGlyphs">100</text>
<text x="2344.2" y="1543.4" font-size="21.5" font-weight="normal" fill="#2a2a2a" textLength="48.2" lengthAdjust="spacingAndGlyphs">Back</text>
<text x="2451.0" y="1543.4" font-size="21.5" font-weight="normal" fill="#2a2a2a" textLength="51.4" lengthAdjust="spacingAndGlyphs">Next</text>
<text x="2311.5" y="1541.0" font-size="22" font-weight="normal" fill="#2a2a2a" textLength="11.2" lengthAdjust="spacingAndGlyphs">«</text>
<text x="2524.5" y="1541.0" font-size="22" font-weight="normal" fill="#2a2a2a" textLength="11.2" lengthAdjust="spacingAndGlyphs">»</text>
<g fill="none" stroke-linejoin="round" stroke-linecap="round">
<path d="M2173.8,1468.9 L2224.1,1480.3 L2229.8,1507.9 M2173.8,1468.9 L2177.9,1516 L2208.7,1532.2 L2263.9,1517.6 L2186.8,1513.6" stroke="#cfcfcf" stroke-opacity="0.55" stroke-width="8"/>
<path d="M2173.8,1468.9 L2224.1,1480.3 L2229.8,1507.9 M2173.8,1468.9 L2177.9,1516 L2208.7,1532.2 L2263.9,1517.6 L2186.8,1513.6" stroke="#9a2a30" stroke-opacity="0.9" stroke-width="5"/>
<path d="M2188.4,1486 L2205.5,1507.1 L2233,1468.1" stroke="#d8d8d8" stroke-opacity="0.7" stroke-width="6"/>
<path d="M2188.4,1486 L2205.5,1507.1 L2233,1468.1" stroke="#333" stroke-opacity="0.8" stroke-width="3"/>
</g>
<text x="2234.0" y="1508.0" font-size="36" font-weight="bold" fill="#9e2a32" textLength="196.0" lengthAdjust="spacingAndGlyphs" fill-opacity="0.82" stroke="#e4e4e4" stroke-opacity="0.65" stroke-width="3" paint-order="stroke">NOTEBOOK</text>
<text x="2431.0" y="1508.0" font-size="36" font-weight="bold" fill="#2a2a2a" textLength="118.0" lengthAdjust="spacingAndGlyphs" fill-opacity="0.7" stroke="#d8d8d8" stroke-opacity="0.75" stroke-width="3" paint-order="stroke">CHECK</text>
</svg>
</body></html>
